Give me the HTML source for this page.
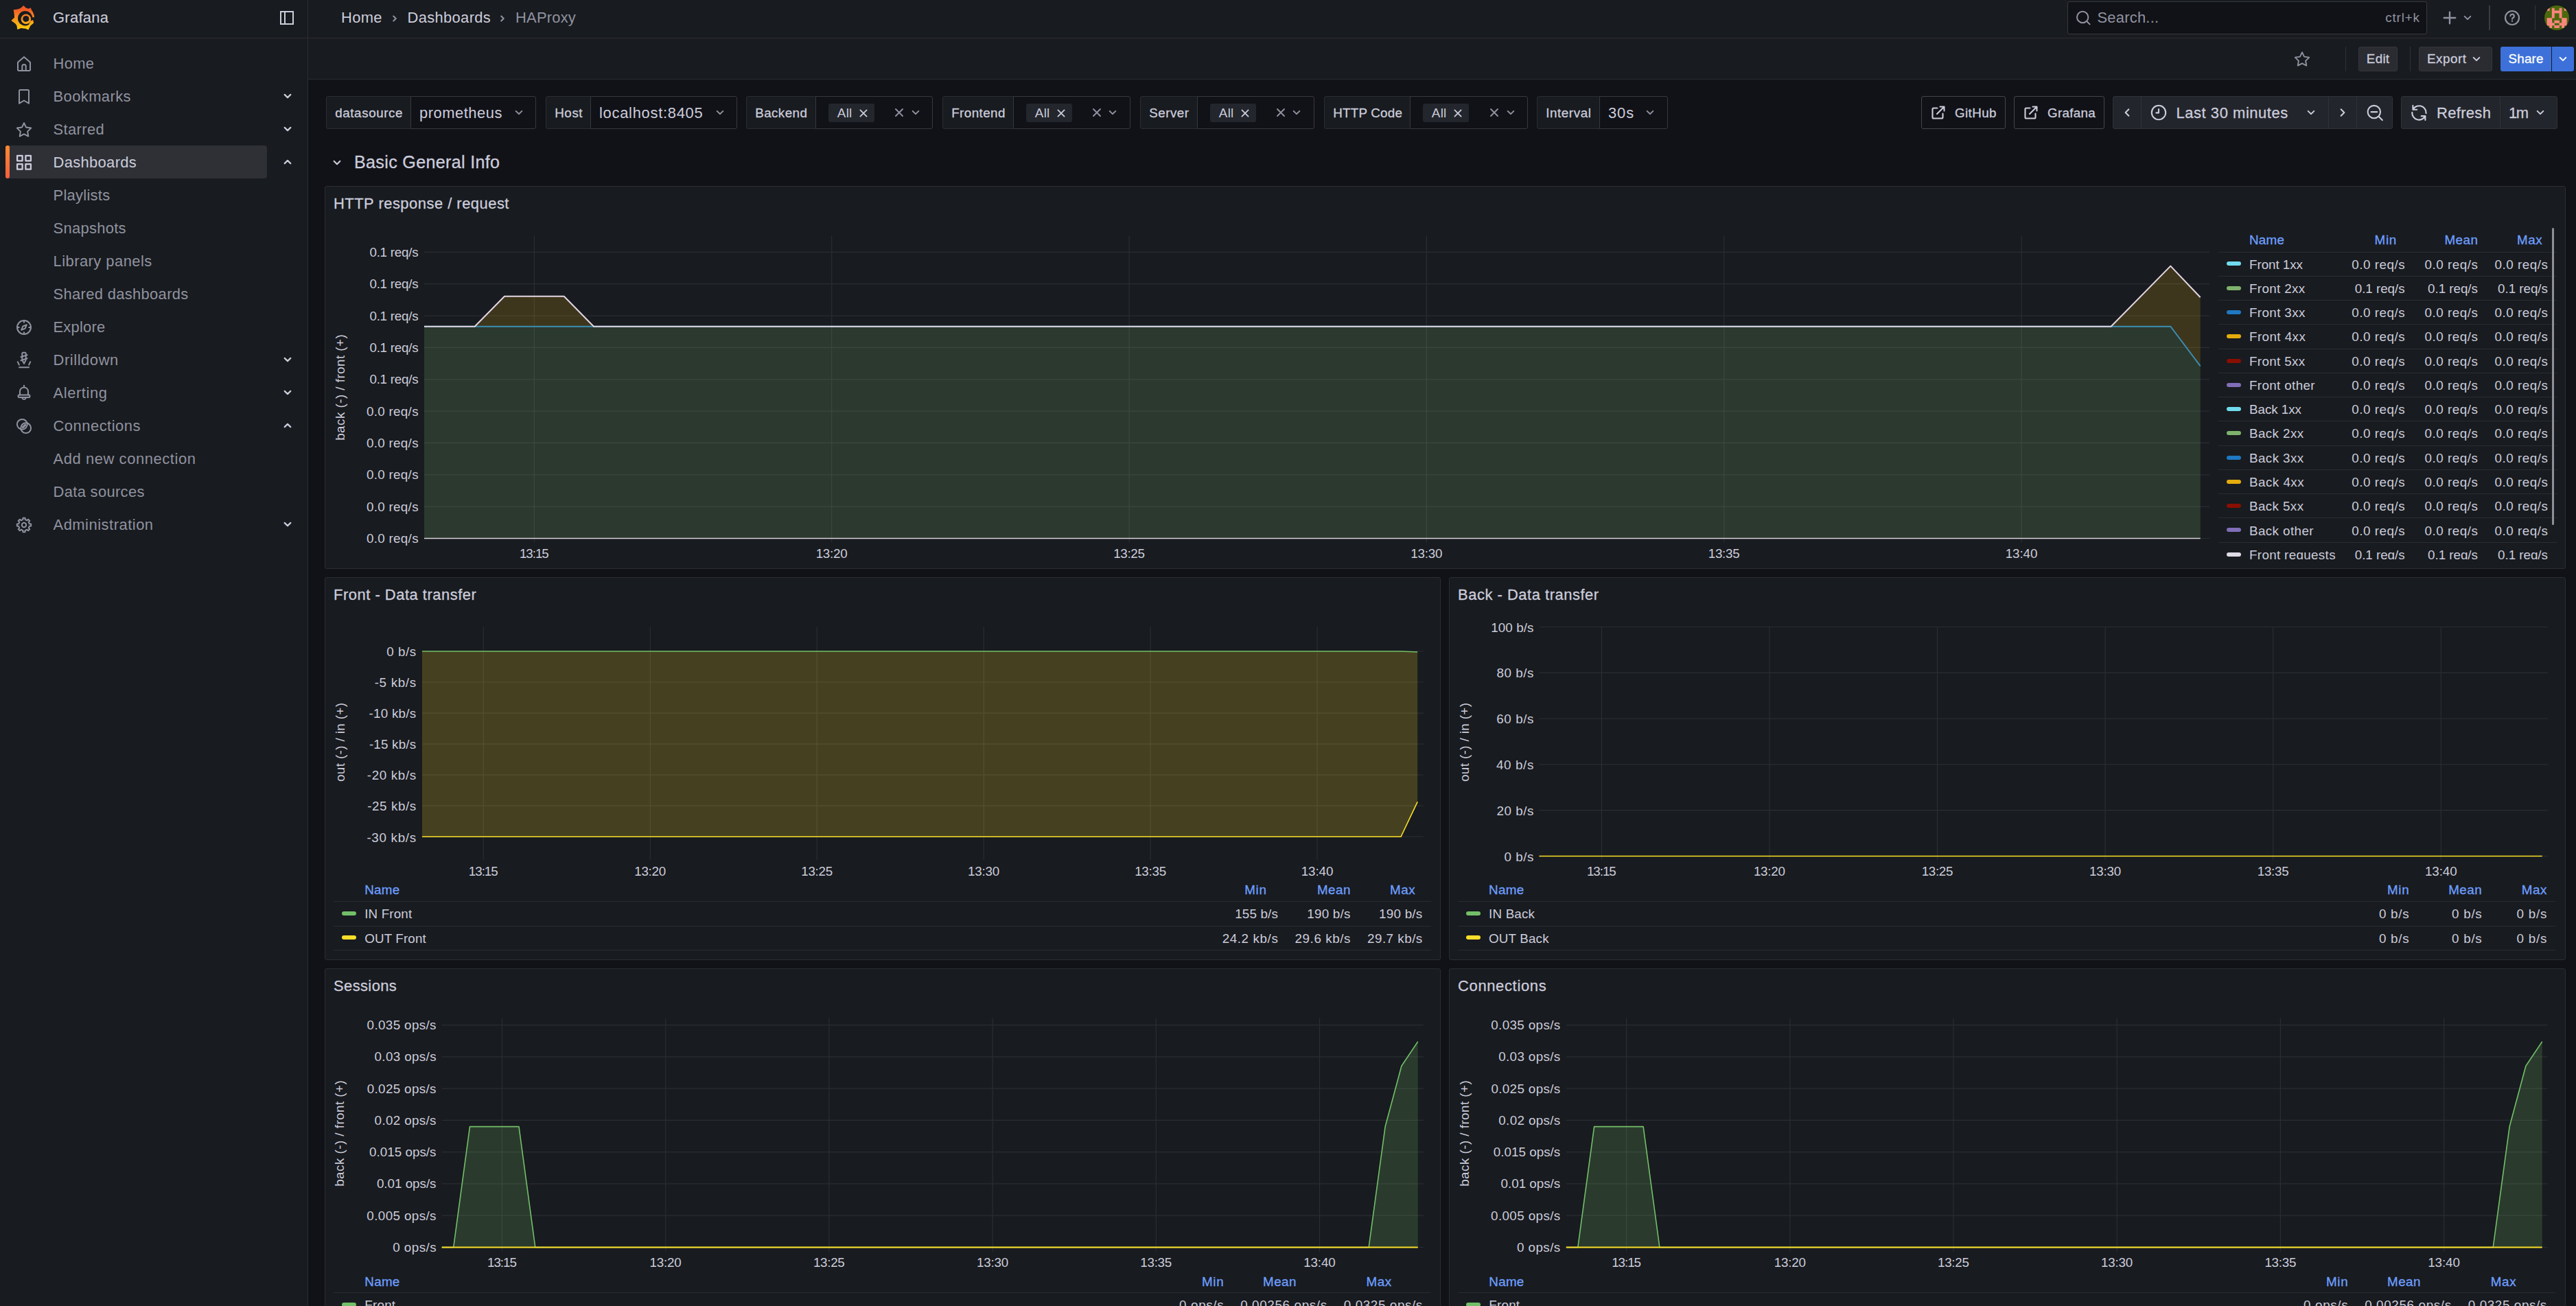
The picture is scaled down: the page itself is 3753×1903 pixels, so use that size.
<!DOCTYPE html><html><head><meta charset="utf-8"><title>HAProxy - Dashboards - Grafana</title><style>html,body{margin:0;padding:0;background:#111217;}
body{width:3753px;height:1903px;overflow:hidden;position:relative;font-family:"Liberation Sans",sans-serif;}
.a{position:absolute;}
.t{position:absolute;white-space:pre;font-kerning:normal;}
svg{overflow:visible;}
</style></head><body>
<div class="a" style="left:0px;top:0px;width:3753px;height:1903px;background:#111217;"></div>
<div class="a" style="left:0px;top:0px;width:448px;height:1903px;background:#181b1f;"></div>
<div class="a" style="left:448px;top:0px;width:1px;height:1903px;background:#2b2d32;"></div>
<div class="a" style="left:449px;top:0px;width:3304px;height:115px;background:#181b1f;"></div>
<div class="a" style="left:0px;top:55px;width:3753px;height:1px;background:#2b2d32;"></div>
<div class="a" style="left:449px;top:115px;width:3304px;height:1px;background:#2b2d32;"></div>
<svg class="a" style="left:10px;top:2px;" width="48" height="48" viewBox="0 0 48 48"><defs><linearGradient id="lg" gradientUnits="userSpaceOnUse" x1="0" y1="42" x2="0" y2="6"><stop offset="0" stop-color="#fcd20a"/><stop offset="0.5" stop-color="#f78d1e"/><stop offset="0.85" stop-color="#f05a28"/></linearGradient></defs>
<path d="M24.45 5.88 L27.28 9.26 L31.62 10.74 L34.93 9.19 L35.74 12.32 L38.05 15.81 L39.52 19.85 L40.00 23.53 L38.24 23.53 L37.13 26.84 L39.04 31.25 L34.74 34.85 L31.32 41.62 L27.28 39.78 L20.59 38.97 L15.37 40.88 L14.41 35.37 L12.13 32.35 L6.32 28.01 L11.03 23.53 L10.74 19.12 L9.63 12.13 L15.44 11.47 L19.93 9.93Z" fill="url(#lg)"/>
<circle cx="26.7" cy="24.7" r="10.7" fill="#181b1f"/>
<path d="M35.5 22.8 L41 23.8 L41 26.4 L36 27.2Z" fill="#181b1f"/>
<circle cx="27.9" cy="25.8" r="7.3" fill="url(#lg)"/>
<path d="M34.8 28.3 L38.3 27.3 L39 31.4 L34.6 35.2 L32.3 35.3 L32.6 32.6Z" fill="url(#lg)"/>
<circle cx="27.8" cy="25.5" r="4.55" fill="#181b1f"/>
<path d="M24.4 29.4 Q25.9 31.6 28.4 31 Q29.7 30.5 29.4 29.5" fill="none" stroke="url(#lg)" stroke-width="1.25" stroke-linecap="round"/></svg>
<span class="t" style="left:77.00px;top:11.03px;font-size:21.95px;line-height:29px;letter-spacing:0.288px;color:#ccccdc;font-weight:400;-webkit-text-stroke:0.12px #ccccdc;">Grafana</span>
<svg class="a" style="left:406px;top:14px;" width="24" height="24" viewBox="0 0 24 24"><g fill="none" stroke="#ccccdc" stroke-width="2"><rect x="3" y="3" width="18" height="18"/><path d="M9 3v18"/></g></svg>
<svg class="a" style="left:23.0px;top:80.5px;" width="24" height="24" viewBox="0 0 24 24"><g fill="none" stroke="#9092a0" stroke-width="2.0" stroke-linecap="round" stroke-linejoin="round"><path d="M3 9.8 L12 1.9 L21 9.8 V20.6 a1.4 1.4 0 0 1 -1.4 1.4 H4.4 a1.4 1.4 0 0 1 -1.4 -1.4 Z"/><path d="M9.3 22 V15.6 a2.7 2.7 0 0 1 5.4 0 V22"/></g></svg>
<span class="t" style="left:77.50px;top:77.53px;font-size:21.95px;line-height:29px;letter-spacing:0.298px;color:#9092a0;font-weight:400;">Home</span>
<svg class="a" style="left:23.0px;top:128.5px;" width="24" height="24" viewBox="0 0 24 24"><g fill="none" stroke="#9092a0" stroke-width="2.0" stroke-linecap="round" stroke-linejoin="round"><path d="M5 21.7 V3.4 a1.5 1.5 0 0 1 1.5 -1.5 H17.5 a1.5 1.5 0 0 1 1.5 1.5 V21.7 L12 17.5 Z"/></g></svg>
<span class="t" style="left:77.50px;top:125.53px;font-size:21.95px;line-height:29px;letter-spacing:0.417px;color:#9092a0;font-weight:400;">Bookmarks</span>
<svg class="a" style="left:407px;top:128px;" width="24" height="24" viewBox="-12 -12 24 24"><path d="M-4.3 -2.15 L0 2.15 L4.3 -2.15" fill="none" stroke="#ccccdc" stroke-width="2.2" stroke-linecap="round" stroke-linejoin="round"/></svg>
<svg class="a" style="left:23.0px;top:176.5px;" width="24" height="24" viewBox="0 0 24 24"><g fill="none" stroke="#9092a0" stroke-width="2.0" stroke-linecap="round" stroke-linejoin="round"><path d="M12 2.2 L15.1 8.6 L22.2 9.6 L17.1 14.6 L18.3 21.6 L12 18.3 L5.7 21.6 L6.9 14.6 L1.8 9.6 L8.9 8.6 Z"/></g></svg>
<span class="t" style="left:77.50px;top:173.53px;font-size:21.95px;line-height:29px;letter-spacing:0.392px;color:#9092a0;font-weight:400;">Starred</span>
<svg class="a" style="left:407px;top:176px;" width="24" height="24" viewBox="-12 -12 24 24"><path d="M-4.3 -2.15 L0 2.15 L4.3 -2.15" fill="none" stroke="#ccccdc" stroke-width="2.2" stroke-linecap="round" stroke-linejoin="round"/></svg>
<div class="a" style="left:8px;top:212px;width:381px;height:48px;background:#2e3036;border-radius:4px;"></div>
<div class="a" style="left:8px;top:212px;width:6px;height:48px;background:linear-gradient(180deg,#ff8a33,#f55f3e);border-radius:3px;"></div>
<svg class="a" style="left:23.0px;top:224.5px;" width="24" height="24" viewBox="0 0 24 24"><g fill="none" stroke="#ccccdc" stroke-width="2.3" stroke-linecap="round" stroke-linejoin="round"><rect x="2.1" y="1.8" width="7.5" height="7.5"/><rect x="14.4" y="1.8" width="7.5" height="7.5"/><rect x="2.1" y="14.2" width="7.5" height="7.5"/><rect x="14.4" y="14.2" width="7.5" height="7.5"/></g></svg>
<span class="t" style="left:77.50px;top:221.53px;font-size:21.95px;line-height:29px;letter-spacing:0.333px;color:#ccccdc;font-weight:400;">Dashboards</span>
<svg class="a" style="left:407px;top:224px;" width="24" height="24" viewBox="-12 -12 24 24"><path d="M-4.3 2.15 L0 -2.15 L4.3 2.15" fill="none" stroke="#ccccdc" stroke-width="2.2" stroke-linecap="round" stroke-linejoin="round"/></svg>
<span class="t" style="left:77.50px;top:269.53px;font-size:21.95px;line-height:29px;letter-spacing:0.270px;color:#9092a0;font-weight:400;">Playlists</span>
<span class="t" style="left:77.50px;top:317.53px;font-size:21.95px;line-height:29px;letter-spacing:0.298px;color:#9092a0;font-weight:400;">Snapshots</span>
<span class="t" style="left:77.50px;top:365.53px;font-size:21.95px;line-height:29px;letter-spacing:0.461px;color:#9092a0;font-weight:400;">Library panels</span>
<span class="t" style="left:77.50px;top:413.53px;font-size:21.95px;line-height:29px;letter-spacing:0.331px;color:#9092a0;font-weight:400;">Shared dashboards</span>
<svg class="a" style="left:23.0px;top:464.5px;" width="24" height="24" viewBox="0 0 24 24"><g fill="none" stroke="#9092a0" stroke-width="2.0" stroke-linecap="round" stroke-linejoin="round"><circle cx="12" cy="12" r="10"/><path d="M15.8 8.2 L13.6 13.6 L8.2 15.8 L10.4 10.4 Z"/><path d="M12 3.2v1.6M12 19.2v1.6M3.2 12h1.6M19.2 12h1.6"/></g></svg>
<span class="t" style="left:77.50px;top:461.53px;font-size:21.95px;line-height:29px;letter-spacing:0.229px;color:#9092a0;font-weight:400;">Explore</span>
<svg class="a" style="left:23.0px;top:512.5px;" width="24" height="24" viewBox="0 0 24 24"><g fill="none" stroke="#9092a0" stroke-width="2.0" stroke-linecap="round" stroke-linejoin="round"><path d="M9.3 2.3 a1.5 1.5 0 0 1 1.5 -1.5 h2.4 a1.5 1.5 0 0 1 1.5 1.5 v9.1 l-2.7 5.4 l-2.7 -5.4 Z"/><path d="M7.4 7.2 L16.6 4.2M7.4 12.2 L16.6 9.2"/><path d="M2.8 14.2 L4.9 18.6M21.2 14.2 L19.1 18.6M5 22.2h14"/></g></svg>
<span class="t" style="left:77.50px;top:509.53px;font-size:21.95px;line-height:29px;letter-spacing:0.566px;color:#9092a0;font-weight:400;">Drilldown</span>
<svg class="a" style="left:407px;top:512px;" width="24" height="24" viewBox="-12 -12 24 24"><path d="M-4.3 -2.15 L0 2.15 L4.3 -2.15" fill="none" stroke="#ccccdc" stroke-width="2.2" stroke-linecap="round" stroke-linejoin="round"/></svg>
<svg class="a" style="left:23.0px;top:560.5px;" width="24" height="24" viewBox="0 0 24 24"><g fill="none" stroke="#9092a0" stroke-width="2.0" stroke-linecap="round" stroke-linejoin="round"><path d="M6 14.6 V9.4 a6 6 0 0 1 12 0 V14.6"/><rect x="3.6" y="14.6" width="16.8" height="3.4" rx="1"/><path d="M9.4 19 a2.7 2.7 0 0 0 5.2 0"/><path d="M12 0.8v2"/></g></svg>
<span class="t" style="left:77.50px;top:557.53px;font-size:21.95px;line-height:29px;letter-spacing:0.586px;color:#9092a0;font-weight:400;">Alerting</span>
<svg class="a" style="left:407px;top:560px;" width="24" height="24" viewBox="-12 -12 24 24"><path d="M-4.3 -2.15 L0 2.15 L4.3 -2.15" fill="none" stroke="#ccccdc" stroke-width="2.2" stroke-linecap="round" stroke-linejoin="round"/></svg>
<svg class="a" style="left:23.0px;top:608.5px;" width="24" height="24" viewBox="0 0 24 24"><g fill="none" stroke="#9092a0" stroke-width="2.0" stroke-linecap="round" stroke-linejoin="round"><circle cx="9.3" cy="9.3" r="7.4"/><circle cx="14.7" cy="14.7" r="7.4"/><path d="M10.3 13.7 L13.7 10.3" stroke-width="3.2"/></g></svg>
<span class="t" style="left:77.50px;top:605.53px;font-size:21.95px;line-height:29px;letter-spacing:0.500px;color:#9092a0;font-weight:400;">Connections</span>
<svg class="a" style="left:407px;top:608px;" width="24" height="24" viewBox="-12 -12 24 24"><path d="M-4.3 2.15 L0 -2.15 L4.3 2.15" fill="none" stroke="#ccccdc" stroke-width="2.2" stroke-linecap="round" stroke-linejoin="round"/></svg>
<span class="t" style="left:77.50px;top:653.53px;font-size:21.95px;line-height:29px;letter-spacing:0.582px;color:#9092a0;font-weight:400;">Add new connection</span>
<span class="t" style="left:77.50px;top:701.53px;font-size:21.95px;line-height:29px;letter-spacing:0.333px;color:#9092a0;font-weight:400;">Data sources</span>
<svg class="a" style="left:23.0px;top:752.5px;" width="24" height="24" viewBox="0 0 24 24"><g fill="none" stroke="#9092a0" stroke-width="2.0" stroke-linecap="round" stroke-linejoin="round"><path d="M10.33 4.18 L10.46 1.82 L13.54 1.82 L13.67 4.18 L16.35 5.29 L18.11 3.71 L20.29 5.89 L18.71 7.65 L19.82 10.33 L22.18 10.46 L22.18 13.54 L19.82 13.67 L18.71 16.35 L20.29 18.11 L18.11 20.29 L16.35 18.71 L13.67 19.82 L13.54 22.18 L10.46 22.18 L10.33 19.82 L7.65 18.71 L5.89 20.29 L3.71 18.11 L5.29 16.35 L4.18 13.67 L1.82 13.54 L1.82 10.46 L4.18 10.33 L5.29 7.65 L3.71 5.89 L5.89 3.71 L7.65 5.29 Z" stroke-linejoin="round"/><circle cx="12" cy="12" r="3.2"/></g></svg>
<span class="t" style="left:77.50px;top:749.53px;font-size:21.95px;line-height:29px;letter-spacing:0.503px;color:#9092a0;font-weight:400;">Administration</span>
<svg class="a" style="left:407px;top:752px;" width="24" height="24" viewBox="-12 -12 24 24"><path d="M-4.3 -2.15 L0 2.15 L4.3 -2.15" fill="none" stroke="#ccccdc" stroke-width="2.2" stroke-linecap="round" stroke-linejoin="round"/></svg>
<span class="t" style="left:497.00px;top:11.03px;font-size:21.95px;line-height:29px;letter-spacing:0.298px;color:#ccccdc;font-weight:400;">Home</span>
<svg class="a" style="left:563px;top:14.5px;" width="24" height="24" viewBox="-12 -12 24 24"><path d="M-1.75 -3.5 L1.75 0 L-1.75 3.5" fill="none" stroke="#9092a0" stroke-width="2.1" stroke-linecap="round" stroke-linejoin="round"/></svg>
<span class="t" style="left:593.50px;top:11.03px;font-size:21.95px;line-height:29px;letter-spacing:0.333px;color:#ccccdc;font-weight:400;">Dashboards</span>
<svg class="a" style="left:720px;top:14.5px;" width="24" height="24" viewBox="-12 -12 24 24"><path d="M-1.75 -3.5 L1.75 0 L-1.75 3.5" fill="none" stroke="#9092a0" stroke-width="2.1" stroke-linecap="round" stroke-linejoin="round"/></svg>
<span class="t" style="left:751.00px;top:11.03px;font-size:21.95px;line-height:29px;letter-spacing:0.206px;color:#9092a0;font-weight:400;">HAProxy</span>
<div class="a" style="left:3012px;top:2px;width:524px;height:48px;background:#111217;border:1px solid #36383e;border-radius:3px;box-sizing:border-box;"></div>
<svg class="a" style="left:3023.0px;top:13.7px;" width="24" height="24" viewBox="0 0 24 24"><g fill="none" stroke="#9092a0" stroke-width="2.0" stroke-linecap="round" stroke-linejoin="round"><circle cx="11.2" cy="11" r="8.2"/><path d="M17.2 17 L21.6 21.4"/></g></svg>
<span class="t" style="left:3055.50px;top:11.03px;font-size:21.95px;line-height:29px;letter-spacing:0.227px;color:#9092a0;font-weight:400;">Search...</span>
<span class="t" style="left:3475.14px;top:13.02px;font-size:18.81px;line-height:25px;letter-spacing:0.878px;color:#9092a0;font-weight:400;">ctrl+k</span>
<svg class="a" style="left:3557.4px;top:13.7px;" width="24" height="24" viewBox="0 0 24 24"><g fill="none" stroke="#9092a0" stroke-width="2.4" stroke-linecap="round" stroke-linejoin="round"><path d="M12 3.8v16.4M3.8 12h16.4"/></g></svg>
<svg class="a" style="left:3583px;top:14px;" width="24" height="24" viewBox="-12 -12 24 24"><path d="M-4.3 -2.15 L0 2.15 L4.3 -2.15" fill="none" stroke="#9092a0" stroke-width="2.0" stroke-linecap="round" stroke-linejoin="round"/></svg>
<div class="a" style="left:3626.2px;top:8px;width:1.6px;height:36px;background:#3a3c43;"></div>
<svg class="a" style="left:3648.3px;top:13.7px;" width="24" height="24" viewBox="0 0 24 24"><g fill="none" stroke="#9092a0" stroke-width="2.2" stroke-linecap="round" stroke-linejoin="round"><circle cx="12" cy="12" r="10"/><path d="M9.4 9.3 a2.7 2.7 0 1 1 3.8 2.6 c-0.8 0.4 -1.2 0.9 -1.2 1.9"/><path d="M12 16.6v0.4"/></g></svg>
<div class="a" style="left:3692.9px;top:8px;width:1.4px;height:36px;background:#36383e;"></div>
<svg class="a" style="left:3707px;top:8px;" width="36" height="36" viewBox="0 0 36 36"><defs><clipPath id="avc"><circle cx="18" cy="18" r="18"/></clipPath></defs><g clip-path="url(#avc)"><rect width="36" height="36" fill="#4a690c"/><g fill="#ff8680"><rect x="3.64" y="3.80" width="3.89" height="3.89"/><rect x="10.82" y="3.80" width="3.89" height="3.89"/><rect x="21.59" y="3.80" width="3.89" height="3.89"/><rect x="28.77" y="3.80" width="3.89" height="3.89"/><rect x="10.82" y="7.39" width="3.89" height="3.89"/><rect x="14.41" y="7.39" width="3.89" height="3.89"/><rect x="18.00" y="7.39" width="3.89" height="3.89"/><rect x="21.59" y="7.39" width="3.89" height="3.89"/><rect x="10.82" y="10.98" width="3.89" height="3.89"/><rect x="21.59" y="10.98" width="3.89" height="3.89"/><rect x="10.82" y="14.57" width="3.89" height="3.89"/><rect x="21.59" y="14.57" width="3.89" height="3.89"/><rect x="3.64" y="18.16" width="3.89" height="3.89"/><rect x="7.23" y="18.16" width="3.89" height="3.89"/><rect x="25.18" y="18.16" width="3.89" height="3.89"/><rect x="28.77" y="18.16" width="3.89" height="3.89"/><rect x="3.64" y="21.75" width="3.89" height="3.89"/><rect x="7.23" y="21.75" width="3.89" height="3.89"/><rect x="14.41" y="21.75" width="3.89" height="3.89"/><rect x="18.00" y="21.75" width="3.89" height="3.89"/><rect x="25.18" y="21.75" width="3.89" height="3.89"/><rect x="28.77" y="21.75" width="3.89" height="3.89"/><rect x="3.64" y="25.34" width="3.89" height="3.89"/><rect x="7.23" y="25.34" width="3.89" height="3.89"/><rect x="10.82" y="25.34" width="3.89" height="3.89"/><rect x="21.59" y="25.34" width="3.89" height="3.89"/><rect x="25.18" y="25.34" width="3.89" height="3.89"/><rect x="28.77" y="25.34" width="3.89" height="3.89"/><rect x="7.23" y="28.93" width="3.89" height="3.89"/><rect x="14.41" y="28.93" width="3.89" height="3.89"/><rect x="18.00" y="28.93" width="3.89" height="3.89"/><rect x="25.18" y="28.93" width="3.89" height="3.89"/></g></g></svg>
<svg class="a" style="left:3342.3px;top:73.7px;" width="24" height="24" viewBox="0 0 24 24"><g fill="none" stroke="#9092a0" stroke-width="1.9" stroke-linecap="round" stroke-linejoin="round"><path d="M12 2.2 L15.1 8.6 L22.2 9.6 L17.1 14.6 L18.3 21.6 L12 18.3 L5.7 21.6 L6.9 14.6 L1.8 9.6 L8.9 8.6 Z"/></g></svg>
<div class="a" style="left:3417px;top:68px;width:1px;height:36px;background:#2f3136;"></div>
<div class="a" style="left:3436px;top:68px;width:57px;height:36px;background:#2a2c32;border:1px solid #34363c;border-radius:3px;box-sizing:border-box;"></div>
<span class="t" style="left:3447.86px;top:73.22px;font-size:18.81px;line-height:25px;letter-spacing:0.282px;color:#ccccdc;font-weight:400;-webkit-text-stroke:0.3px #ccccdc;">Edit</span>
<div class="a" style="left:3511px;top:68px;width:1px;height:36px;background:#2f3136;"></div>
<div class="a" style="left:3524px;top:68px;width:107px;height:36px;background:#2a2c32;border:1px solid #34363c;border-radius:3px;box-sizing:border-box;"></div>
<span class="t" style="left:3536.00px;top:73.22px;font-size:18.81px;line-height:25px;letter-spacing:0.543px;color:#ccccdc;font-weight:400;-webkit-text-stroke:0.3px #ccccdc;">Export</span>
<svg class="a" style="left:3596px;top:74px;" width="24" height="24" viewBox="-12 -12 24 24"><path d="M-4.3 -2.15 L0 2.15 L4.3 -2.15" fill="none" stroke="#ccccdc" stroke-width="2.0" stroke-linecap="round" stroke-linejoin="round"/></svg>
<div class="a" style="left:3643px;top:68px;width:74px;height:36px;background:#3d71d9;border-radius:3px;border-radius:3px 0 0 3px;"></div>
<span class="t" style="left:3654.58px;top:73.22px;font-size:18.81px;line-height:25px;letter-spacing:0.158px;color:#ffffff;font-weight:400;-webkit-text-stroke:0.3px #ffffff;">Share</span>
<div class="a" style="left:3718px;top:68px;width:32px;height:36px;background:#3d71d9;border-radius:0 3px 3px 0;"></div>
<svg class="a" style="left:3722px;top:74px;" width="24" height="24" viewBox="-12 -12 24 24"><path d="M-4.3 -2.15 L0 2.15 L4.3 -2.15" fill="none" stroke="#ffffff" stroke-width="2.0" stroke-linecap="round" stroke-linejoin="round"/></svg>
<div class="a" style="left:475px;top:140px;width:124px;height:48px;background:#181b1f;border:1px solid #2b2d32;box-sizing:border-box;border-radius:3px 0 0 3px;"></div>
<div class="a" style="left:598px;top:140px;width:183px;height:48px;background:#111217;border:1px solid #36383e;box-sizing:border-box;border-radius:0 3px 3px 0;"></div>
<span class="t" style="left:488.20px;top:152.02px;font-size:18.81px;line-height:25px;letter-spacing:0.595px;color:#ccccdc;font-weight:400;-webkit-text-stroke:0.3px #ccccdc;">datasource</span>
<span class="t" style="left:611.00px;top:149.53px;font-size:21.95px;line-height:29px;letter-spacing:0.504px;color:#ccccdc;font-weight:400;">prometheus</span>
<svg class="a" style="left:743.7px;top:152px;" width="24" height="24" viewBox="-12 -12 24 24"><path d="M-4.3 -2.15 L0 2.15 L4.3 -2.15" fill="none" stroke="#9092a0" stroke-width="2.0" stroke-linecap="round" stroke-linejoin="round"/></svg>
<div class="a" style="left:795px;top:140px;width:66px;height:48px;background:#181b1f;border:1px solid #2b2d32;box-sizing:border-box;border-radius:3px 0 0 3px;"></div>
<div class="a" style="left:860px;top:140px;width:214px;height:48px;background:#111217;border:1px solid #36383e;box-sizing:border-box;border-radius:0 3px 3px 0;"></div>
<span class="t" style="left:808.20px;top:152.02px;font-size:18.81px;line-height:25px;letter-spacing:0.582px;color:#ccccdc;font-weight:400;-webkit-text-stroke:0.3px #ccccdc;">Host</span>
<span class="t" style="left:873.00px;top:149.53px;font-size:21.95px;line-height:29px;letter-spacing:0.712px;color:#ccccdc;font-weight:400;">localhost:8405</span>
<svg class="a" style="left:1036.7px;top:152px;" width="24" height="24" viewBox="-12 -12 24 24"><path d="M-4.3 -2.15 L0 2.15 L4.3 -2.15" fill="none" stroke="#9092a0" stroke-width="2.0" stroke-linecap="round" stroke-linejoin="round"/></svg>
<div class="a" style="left:1087px;top:140px;width:102px;height:48px;background:#181b1f;border:1px solid #2b2d32;box-sizing:border-box;border-radius:3px 0 0 3px;"></div>
<div class="a" style="left:1188px;top:140px;width:171px;height:48px;background:#111217;border:1px solid #36383e;box-sizing:border-box;border-radius:0 3px 3px 0;"></div>
<span class="t" style="left:1100.20px;top:152.02px;font-size:18.81px;line-height:25px;letter-spacing:0.426px;color:#ccccdc;font-weight:400;-webkit-text-stroke:0.3px #ccccdc;">Backend</span>
<div class="a" style="left:1207px;top:151px;width:66.5px;height:27px;background:#23262c;border-radius:3px;"></div>
<span class="t" style="left:1219.80px;top:152.22px;font-size:18.81px;line-height:25px;letter-spacing:0.300px;color:#ccccdc;font-weight:400;">All</span>
<svg class="a" style="left:1245.5px;top:152.5px;" width="24" height="24" viewBox="-12 -12 24 24"><path d="M-4.6 -4.6L4.6 4.6M4.6 -4.6L-4.6 4.6" fill="none" stroke="#ccccdc" stroke-width="1.8" stroke-linecap="round"/></svg>
<svg class="a" style="left:1298px;top:152px;" width="24" height="24" viewBox="-12 -12 24 24"><path d="M-5 -5L5 5M5 -5L-5 5" fill="none" stroke="#9092a0" stroke-width="1.9" stroke-linecap="round"/></svg>
<svg class="a" style="left:1321.7px;top:152px;" width="24" height="24" viewBox="-12 -12 24 24"><path d="M-4.3 -2.15 L0 2.15 L4.3 -2.15" fill="none" stroke="#9092a0" stroke-width="2.0" stroke-linecap="round" stroke-linejoin="round"/></svg>
<div class="a" style="left:1373px;top:140px;width:104px;height:48px;background:#181b1f;border:1px solid #2b2d32;box-sizing:border-box;border-radius:3px 0 0 3px;"></div>
<div class="a" style="left:1476px;top:140px;width:170.5px;height:48px;background:#111217;border:1px solid #36383e;box-sizing:border-box;border-radius:0 3px 3px 0;"></div>
<span class="t" style="left:1386.20px;top:152.02px;font-size:18.81px;line-height:25px;letter-spacing:0.433px;color:#ccccdc;font-weight:400;-webkit-text-stroke:0.3px #ccccdc;">Frontend</span>
<div class="a" style="left:1495px;top:151px;width:66.5px;height:27px;background:#23262c;border-radius:3px;"></div>
<span class="t" style="left:1507.80px;top:152.22px;font-size:18.81px;line-height:25px;letter-spacing:0.300px;color:#ccccdc;font-weight:400;">All</span>
<svg class="a" style="left:1533.5px;top:152.5px;" width="24" height="24" viewBox="-12 -12 24 24"><path d="M-4.6 -4.6L4.6 4.6M4.6 -4.6L-4.6 4.6" fill="none" stroke="#ccccdc" stroke-width="1.8" stroke-linecap="round"/></svg>
<svg class="a" style="left:1585.5px;top:152px;" width="24" height="24" viewBox="-12 -12 24 24"><path d="M-5 -5L5 5M5 -5L-5 5" fill="none" stroke="#9092a0" stroke-width="1.9" stroke-linecap="round"/></svg>
<svg class="a" style="left:1609.2px;top:152px;" width="24" height="24" viewBox="-12 -12 24 24"><path d="M-4.3 -2.15 L0 2.15 L4.3 -2.15" fill="none" stroke="#9092a0" stroke-width="2.0" stroke-linecap="round" stroke-linejoin="round"/></svg>
<div class="a" style="left:1661px;top:140px;width:84px;height:48px;background:#181b1f;border:1px solid #2b2d32;box-sizing:border-box;border-radius:3px 0 0 3px;"></div>
<div class="a" style="left:1744px;top:140px;width:170.5px;height:48px;background:#111217;border:1px solid #36383e;box-sizing:border-box;border-radius:0 3px 3px 0;"></div>
<span class="t" style="left:1674.20px;top:152.02px;font-size:18.81px;line-height:25px;letter-spacing:0.489px;color:#ccccdc;font-weight:400;-webkit-text-stroke:0.3px #ccccdc;">Server</span>
<div class="a" style="left:1763px;top:151px;width:66.5px;height:27px;background:#23262c;border-radius:3px;"></div>
<span class="t" style="left:1775.80px;top:152.22px;font-size:18.81px;line-height:25px;letter-spacing:0.300px;color:#ccccdc;font-weight:400;">All</span>
<svg class="a" style="left:1801.5px;top:152.5px;" width="24" height="24" viewBox="-12 -12 24 24"><path d="M-4.6 -4.6L4.6 4.6M4.6 -4.6L-4.6 4.6" fill="none" stroke="#ccccdc" stroke-width="1.8" stroke-linecap="round"/></svg>
<svg class="a" style="left:1853.5px;top:152px;" width="24" height="24" viewBox="-12 -12 24 24"><path d="M-5 -5L5 5M5 -5L-5 5" fill="none" stroke="#9092a0" stroke-width="1.9" stroke-linecap="round"/></svg>
<svg class="a" style="left:1877.2px;top:152px;" width="24" height="24" viewBox="-12 -12 24 24"><path d="M-4.3 -2.15 L0 2.15 L4.3 -2.15" fill="none" stroke="#9092a0" stroke-width="2.0" stroke-linecap="round" stroke-linejoin="round"/></svg>
<div class="a" style="left:1929px;top:140px;width:126px;height:48px;background:#181b1f;border:1px solid #2b2d32;box-sizing:border-box;border-radius:3px 0 0 3px;"></div>
<div class="a" style="left:2054px;top:140px;width:172px;height:48px;background:#111217;border:1px solid #36383e;box-sizing:border-box;border-radius:0 3px 3px 0;"></div>
<span class="t" style="left:1942.20px;top:152.02px;font-size:18.81px;line-height:25px;letter-spacing:0.232px;color:#ccccdc;font-weight:400;-webkit-text-stroke:0.3px #ccccdc;">HTTP Code</span>
<div class="a" style="left:2073px;top:151px;width:66.5px;height:27px;background:#23262c;border-radius:3px;"></div>
<span class="t" style="left:2085.80px;top:152.22px;font-size:18.81px;line-height:25px;letter-spacing:0.300px;color:#ccccdc;font-weight:400;">All</span>
<svg class="a" style="left:2111.5px;top:152.5px;" width="24" height="24" viewBox="-12 -12 24 24"><path d="M-4.6 -4.6L4.6 4.6M4.6 -4.6L-4.6 4.6" fill="none" stroke="#ccccdc" stroke-width="1.8" stroke-linecap="round"/></svg>
<svg class="a" style="left:2165px;top:152px;" width="24" height="24" viewBox="-12 -12 24 24"><path d="M-5 -5L5 5M5 -5L-5 5" fill="none" stroke="#9092a0" stroke-width="1.9" stroke-linecap="round"/></svg>
<svg class="a" style="left:2188.7px;top:152px;" width="24" height="24" viewBox="-12 -12 24 24"><path d="M-4.3 -2.15 L0 2.15 L4.3 -2.15" fill="none" stroke="#9092a0" stroke-width="2.0" stroke-linecap="round" stroke-linejoin="round"/></svg>
<div class="a" style="left:2239px;top:140px;width:92px;height:48px;background:#181b1f;border:1px solid #2b2d32;box-sizing:border-box;border-radius:3px 0 0 3px;"></div>
<div class="a" style="left:2330px;top:140px;width:99.5px;height:48px;background:#111217;border:1px solid #36383e;box-sizing:border-box;border-radius:0 3px 3px 0;"></div>
<span class="t" style="left:2252.20px;top:152.02px;font-size:18.81px;line-height:25px;letter-spacing:0.577px;color:#ccccdc;font-weight:400;-webkit-text-stroke:0.3px #ccccdc;">Interval</span>
<span class="t" style="left:2343.00px;top:149.53px;font-size:21.95px;line-height:29px;letter-spacing:0.868px;color:#ccccdc;font-weight:400;">30s</span>
<svg class="a" style="left:2392.2px;top:152px;" width="24" height="24" viewBox="-12 -12 24 24"><path d="M-4.3 -2.15 L0 2.15 L4.3 -2.15" fill="none" stroke="#9092a0" stroke-width="2.0" stroke-linecap="round" stroke-linejoin="round"/></svg>
<div class="a" style="left:2799px;top:140px;width:123px;height:48px;background:#111217;border:1px solid #43454c;border-radius:3px;box-sizing:border-box;"></div>
<svg class="a" style="left:2811.5px;top:152.0px;" width="24" height="24" viewBox="0 0 24 24"><g fill="none" stroke="#ccccdc" stroke-width="2.1" stroke-linecap="round" stroke-linejoin="round"><path d="M18.5 13.5v5.5a1.5 1.5 0 0 1 -1.5 1.5H5a1.5 1.5 0 0 1 -1.5 -1.5V7a1.5 1.5 0 0 1 1.5 -1.5h5.5"/><path d="M14.5 3.5h6v6M20.5 3.5 L10 14"/></g></svg>
<span class="t" style="left:2848.00px;top:152.22px;font-size:18.81px;line-height:25px;letter-spacing:0.383px;color:#ccccdc;font-weight:400;-webkit-text-stroke:0.3px #ccccdc;">GitHub</span>
<div class="a" style="left:2934px;top:140px;width:132px;height:48px;background:#111217;border:1px solid #43454c;border-radius:3px;box-sizing:border-box;"></div>
<svg class="a" style="left:2946.5px;top:152.0px;" width="24" height="24" viewBox="0 0 24 24"><g fill="none" stroke="#ccccdc" stroke-width="2.1" stroke-linecap="round" stroke-linejoin="round"><path d="M18.5 13.5v5.5a1.5 1.5 0 0 1 -1.5 1.5H5a1.5 1.5 0 0 1 -1.5 -1.5V7a1.5 1.5 0 0 1 1.5 -1.5h5.5"/><path d="M14.5 3.5h6v6M20.5 3.5 L10 14"/></g></svg>
<span class="t" style="left:2983.00px;top:152.22px;font-size:18.81px;line-height:25px;letter-spacing:0.280px;color:#ccccdc;font-weight:400;-webkit-text-stroke:0.3px #ccccdc;">Grafana</span>
<div class="a" style="left:3078px;top:140px;width:408px;height:48px;background:#22252b;border:1px solid #2f3237;border-radius:3px;box-sizing:border-box;"></div>
<div class="a" style="left:3119px;top:141px;width:1px;height:46px;background:#2f3237;"></div>
<div class="a" style="left:3392px;top:141px;width:1px;height:46px;background:#2f3237;"></div>
<div class="a" style="left:3433px;top:141px;width:1px;height:46px;background:#2f3237;"></div>
<svg class="a" style="left:3086.5px;top:152px;" width="24" height="24" viewBox="-12 -12 24 24"><path d="M2.35 -4.7 L-2.35 0 L2.35 4.7" fill="none" stroke="#ccccdc" stroke-width="2.1" stroke-linecap="round" stroke-linejoin="round"/></svg>
<svg class="a" style="left:3133.0px;top:152.3px;" width="24" height="24" viewBox="0 0 24 24"><g fill="none" stroke="#ccccdc" stroke-width="2.1" stroke-linecap="round" stroke-linejoin="round"><circle cx="12" cy="12" r="10.2"/><path d="M12 7V12.4H8.4"/></g></svg>
<span class="t" style="left:3170.50px;top:149.53px;font-size:21.95px;line-height:29px;letter-spacing:0.561px;color:#ccccdc;font-weight:400;-webkit-text-stroke:0.3px #ccccdc;">Last 30 minutes</span>
<svg class="a" style="left:3355px;top:152px;" width="24" height="24" viewBox="-12 -12 24 24"><path d="M-4.3 -2.15 L0 2.15 L4.3 -2.15" fill="none" stroke="#ccccdc" stroke-width="2.0" stroke-linecap="round" stroke-linejoin="round"/></svg>
<svg class="a" style="left:3400.5px;top:152px;" width="24" height="24" viewBox="-12 -12 24 24"><path d="M-2.35 -4.7 L2.35 0 L-2.35 4.7" fill="none" stroke="#ccccdc" stroke-width="2.1" stroke-linecap="round" stroke-linejoin="round"/></svg>
<svg class="a" style="left:3447.5px;top:152.0px;" width="24" height="24" viewBox="0 0 24 24"><g fill="none" stroke="#ccccdc" stroke-width="2.1" stroke-linecap="round" stroke-linejoin="round"><circle cx="10.8" cy="11.1" r="9.2"/><path d="M17.5 17.8 L22.8 23.1M6.5 11.1h8.8"/></g></svg>
<div class="a" style="left:3498px;top:140px;width:228px;height:48px;background:#22252b;border:1px solid #2f3237;border-radius:3px;box-sizing:border-box;"></div>
<div class="a" style="left:3642px;top:141px;width:1px;height:46px;background:#2f3237;"></div>
<svg class="a" style="left:3512.0px;top:152.0px;" width="24" height="24" viewBox="0 0 24 24"><g fill="none" stroke="#ccccdc" stroke-width="2.1" stroke-linecap="round" stroke-linejoin="round"><path d="M3.4 1.9 V7.7 H9.2M3.4 7.7 A10.15 10.15 0 0 1 22.55 13M21.4 22.9 V17.1 H15.6M21.4 17.1 A10.15 10.15 0 0 1 2.25 11.8"/></g></svg>
<span class="t" style="left:3550.00px;top:149.53px;font-size:21.95px;line-height:29px;letter-spacing:0.337px;color:#ccccdc;font-weight:400;-webkit-text-stroke:0.3px #ccccdc;">Refresh</span>
<span class="t" style="left:3655.00px;top:149.53px;font-size:21.95px;line-height:29px;letter-spacing:-1.338px;color:#ccccdc;font-weight:400;-webkit-text-stroke:0.3px #ccccdc;">1m</span>
<svg class="a" style="left:3689px;top:152px;" width="24" height="24" viewBox="-12 -12 24 24"><path d="M-4.3 -2.15 L0 2.15 L4.3 -2.15" fill="none" stroke="#ccccdc" stroke-width="2.0" stroke-linecap="round" stroke-linejoin="round"/></svg>
<svg class="a" style="left:479px;top:225px;" width="24" height="24" viewBox="-12 -12 24 24"><path d="M-4.4 -2.2 L0 2.2 L4.4 -2.2" fill="none" stroke="#ccccdc" stroke-width="2.1" stroke-linecap="round" stroke-linejoin="round"/></svg>
<span class="t" style="left:516.00px;top:219.43px;font-size:25.08px;line-height:34px;letter-spacing:0.339px;color:#ccccdc;font-weight:400;-webkit-text-stroke:0.3px #ccccdc;">Basic General Info</span>
<div class="a" style="left:473px;top:271px;width:3265px;height:558px;background:#181b1f;border:1px solid #2b2d32;border-radius:3px;box-sizing:border-box;"></div>
<span class="t" style="left:486.00px;top:281.83px;font-size:21.95px;line-height:29px;letter-spacing:0.490px;color:#ccccdc;font-weight:400;-webkit-text-stroke:0.3px #ccccdc;">HTTP response / request</span>
<svg class="a" style="left:0px;top:0px;pointer-events:none;" width="3753" height="1903" viewBox="0 0 3753 1903"><path d="M618 367.4H3219" stroke="#2a2d32" stroke-width="1.2"/><path d="M618 413.7H3219" stroke="#2a2d32" stroke-width="1.2"/><path d="M618 460.1H3219" stroke="#2a2d32" stroke-width="1.2"/><path d="M618 506.4H3219" stroke="#2a2d32" stroke-width="1.2"/><path d="M618 552.8H3219" stroke="#2a2d32" stroke-width="1.2"/><path d="M618 599.1H3219" stroke="#2a2d32" stroke-width="1.2"/><path d="M618 645.4H3219" stroke="#2a2d32" stroke-width="1.2"/><path d="M618 691.8H3219" stroke="#2a2d32" stroke-width="1.2"/><path d="M618 738.1H3219" stroke="#2a2d32" stroke-width="1.2"/><path d="M618 784.5H3219" stroke="#2a2d32" stroke-width="1.2"/><path d="M778.4 343.5V790.4" stroke="#2a2d32" stroke-width="1.2"/><path d="M1211.7 343.5V790.4" stroke="#2a2d32" stroke-width="1.2"/><path d="M1645.1 343.5V790.4" stroke="#2a2d32" stroke-width="1.2"/><path d="M2078.4 343.5V790.4" stroke="#2a2d32" stroke-width="1.2"/><path d="M2511.8 343.5V790.4" stroke="#2a2d32" stroke-width="1.2"/><path d="M2945.1 343.5V790.4" stroke="#2a2d32" stroke-width="1.2"/><polygon points="618.0,475.7 3162.3,475.7 3205.7,533.4 3205.7,784.4 618.0,784.4" fill="#7eb26d" fill-opacity="0.2"/><polygon points="618.0,475.7 691.7,475.7 735.0,431.8 821.7,431.8 865.0,475.7 3075.6,475.7 3162.3,387.6 3205.7,433.2 3205.7,533.4 3162.3,475.7 618.0,475.7" fill="#e5ac0e" fill-opacity="0.185"/><polyline points="618.0,475.7 3162.3,475.7 3205.7,533.4" fill="none" stroke="#3b8db3" stroke-width="1.9"/><polyline points="618.0,475.7 691.7,475.7 735.0,431.8 821.7,431.8 865.0,475.7 3075.6,475.7 3162.3,387.6 3205.7,433.2" fill="none" stroke="#e4d6e4" stroke-width="2" stroke-linejoin="round"/><path d="M618 784.4H3205.7" stroke="#d8d2dc" stroke-width="1.5"/></svg>
<span class="t" style="left:538.44px;top:354.92px;font-size:18.81px;line-height:25px;letter-spacing:-0.255px;color:#ccccdc;font-weight:400;">0.1 req/s</span>
<span class="t" style="left:538.44px;top:401.26px;font-size:18.81px;line-height:25px;letter-spacing:-0.255px;color:#ccccdc;font-weight:400;">0.1 req/s</span>
<span class="t" style="left:538.44px;top:447.60px;font-size:18.81px;line-height:25px;letter-spacing:-0.255px;color:#ccccdc;font-weight:400;">0.1 req/s</span>
<span class="t" style="left:538.44px;top:493.94px;font-size:18.81px;line-height:25px;letter-spacing:-0.255px;color:#ccccdc;font-weight:400;">0.1 req/s</span>
<span class="t" style="left:538.44px;top:540.28px;font-size:18.81px;line-height:25px;letter-spacing:-0.255px;color:#ccccdc;font-weight:400;">0.1 req/s</span>
<span class="t" style="left:533.88px;top:586.62px;font-size:18.81px;line-height:25px;letter-spacing:0.315px;color:#ccccdc;font-weight:400;">0.0 req/s</span>
<span class="t" style="left:533.88px;top:632.96px;font-size:18.81px;line-height:25px;letter-spacing:0.315px;color:#ccccdc;font-weight:400;">0.0 req/s</span>
<span class="t" style="left:533.88px;top:679.30px;font-size:18.81px;line-height:25px;letter-spacing:0.315px;color:#ccccdc;font-weight:400;">0.0 req/s</span>
<span class="t" style="left:533.88px;top:725.64px;font-size:18.81px;line-height:25px;letter-spacing:0.315px;color:#ccccdc;font-weight:400;">0.0 req/s</span>
<span class="t" style="left:533.88px;top:771.98px;font-size:18.81px;line-height:25px;letter-spacing:0.315px;color:#ccccdc;font-weight:400;">0.0 req/s</span>
<span class="t" style="left:756.94px;top:794.12px;font-size:18.81px;line-height:25px;letter-spacing:-1.037px;color:#ccccdc;font-weight:400;">13:15</span>
<span class="t" style="left:1188.65px;top:794.12px;font-size:18.81px;line-height:25px;letter-spacing:-0.221px;color:#ccccdc;font-weight:400;">13:20</span>
<span class="t" style="left:1622.15px;top:794.12px;font-size:18.81px;line-height:25px;letter-spacing:-0.305px;color:#ccccdc;font-weight:400;">13:25</span>
<span class="t" style="left:2055.27px;top:794.12px;font-size:18.81px;line-height:25px;letter-spacing:-0.193px;color:#ccccdc;font-weight:400;">13:30</span>
<span class="t" style="left:2488.78px;top:794.12px;font-size:18.81px;line-height:25px;letter-spacing:-0.277px;color:#ccccdc;font-weight:400;">13:35</span>
<span class="t" style="left:2921.75px;top:794.12px;font-size:18.81px;line-height:25px;letter-spacing:-0.093px;color:#ccccdc;font-weight:400;">13:40</span>
<span class="t" style="left:418.18px;top:551.52px;font-size:18.81px;line-height:25px;letter-spacing:0.465px;color:#ccccdc;font-weight:400;transform:rotate(-90deg);transform-origin:77.32px 12.48px;">back (-) / front (+)</span>
<div class="a" style="left:3225px;top:330px;width:505px;height:485px;overflow:hidden;"><div class="a" style="left:-3225px;top:-330px;">
<span class="t" style="left:3277.00px;top:337.32px;font-size:18.81px;line-height:25px;letter-spacing:0.282px;color:#6e9fff;font-weight:400;-webkit-text-stroke:0.3px #6e9fff;">Name</span>
<span class="t" style="left:3459.54px;top:337.32px;font-size:18.81px;line-height:25px;letter-spacing:0.717px;color:#6e9fff;font-weight:400;-webkit-text-stroke:0.3px #6e9fff;">Min</span>
<span class="t" style="left:3561.38px;top:337.32px;font-size:18.81px;line-height:25px;letter-spacing:0.519px;color:#6e9fff;font-weight:400;-webkit-text-stroke:0.3px #6e9fff;">Mean</span>
<span class="t" style="left:3667.04px;top:337.32px;font-size:18.81px;line-height:25px;letter-spacing:0.605px;color:#6e9fff;font-weight:400;-webkit-text-stroke:0.3px #6e9fff;">Max</span>
<div class="a" style="left:3232px;top:366.5px;width:493px;height:1px;background:#2a2c31;"></div>
<div class="a" style="left:3244px;top:381.43499999999995px;width:21px;height:6px;background:#70dbed;border-radius:3px;"></div>
<span class="t" style="left:3277.00px;top:372.56px;font-size:18.81px;line-height:25px;letter-spacing:-0.049px;color:#ccccdc;font-weight:400;">Front 1xx</span>
<span class="t" style="left:3426.18px;top:372.56px;font-size:18.81px;line-height:25px;letter-spacing:0.540px;color:#ccccdc;font-weight:400;">0.0 req/s</span>
<span class="t" style="left:3532.48px;top:372.56px;font-size:18.81px;line-height:25px;letter-spacing:0.540px;color:#ccccdc;font-weight:400;">0.0 req/s</span>
<span class="t" style="left:3634.48px;top:372.56px;font-size:18.81px;line-height:25px;letter-spacing:0.540px;color:#ccccdc;font-weight:400;">0.0 req/s</span>
<div class="a" style="left:3232px;top:401.77px;width:493px;height:1px;background:#2a2c31;"></div>
<div class="a" style="left:3244px;top:416.7049999999999px;width:21px;height:6px;background:#7eb26d;border-radius:3px;"></div>
<span class="t" style="left:3277.00px;top:407.83px;font-size:18.81px;line-height:25px;letter-spacing:0.357px;color:#ccccdc;font-weight:400;">Front 2xx</span>
<span class="t" style="left:3430.74px;top:407.83px;font-size:18.81px;line-height:25px;letter-spacing:-0.030px;color:#ccccdc;font-weight:400;">0.1 req/s</span>
<span class="t" style="left:3537.04px;top:407.83px;font-size:18.81px;line-height:25px;letter-spacing:-0.030px;color:#ccccdc;font-weight:400;">0.1 req/s</span>
<span class="t" style="left:3639.04px;top:407.83px;font-size:18.81px;line-height:25px;letter-spacing:-0.030px;color:#ccccdc;font-weight:400;">0.1 req/s</span>
<div class="a" style="left:3232px;top:437.04px;width:493px;height:1px;background:#2a2c31;"></div>
<div class="a" style="left:3244px;top:451.97499999999997px;width:21px;height:6px;background:#1f78c1;border-radius:3px;"></div>
<span class="t" style="left:3277.00px;top:443.10px;font-size:18.81px;line-height:25px;letter-spacing:0.372px;color:#ccccdc;font-weight:400;">Front 3xx</span>
<span class="t" style="left:3426.18px;top:443.10px;font-size:18.81px;line-height:25px;letter-spacing:0.540px;color:#ccccdc;font-weight:400;">0.0 req/s</span>
<span class="t" style="left:3532.48px;top:443.10px;font-size:18.81px;line-height:25px;letter-spacing:0.540px;color:#ccccdc;font-weight:400;">0.0 req/s</span>
<span class="t" style="left:3634.48px;top:443.10px;font-size:18.81px;line-height:25px;letter-spacing:0.540px;color:#ccccdc;font-weight:400;">0.0 req/s</span>
<div class="a" style="left:3232px;top:472.31px;width:493px;height:1px;background:#2a2c31;"></div>
<div class="a" style="left:3244px;top:487.24499999999995px;width:21px;height:6px;background:#e5ac0e;border-radius:3px;"></div>
<span class="t" style="left:3277.00px;top:478.37px;font-size:18.81px;line-height:25px;letter-spacing:0.430px;color:#ccccdc;font-weight:400;">Front 4xx</span>
<span class="t" style="left:3426.18px;top:478.37px;font-size:18.81px;line-height:25px;letter-spacing:0.540px;color:#ccccdc;font-weight:400;">0.0 req/s</span>
<span class="t" style="left:3532.48px;top:478.37px;font-size:18.81px;line-height:25px;letter-spacing:0.540px;color:#ccccdc;font-weight:400;">0.0 req/s</span>
<span class="t" style="left:3634.48px;top:478.37px;font-size:18.81px;line-height:25px;letter-spacing:0.540px;color:#ccccdc;font-weight:400;">0.0 req/s</span>
<div class="a" style="left:3232px;top:507.58000000000004px;width:493px;height:1px;background:#2a2c31;"></div>
<div class="a" style="left:3244px;top:522.515px;width:21px;height:6px;background:#890f02;border-radius:3px;"></div>
<span class="t" style="left:3277.00px;top:513.64px;font-size:18.81px;line-height:25px;letter-spacing:0.353px;color:#ccccdc;font-weight:400;">Front 5xx</span>
<span class="t" style="left:3426.18px;top:513.64px;font-size:18.81px;line-height:25px;letter-spacing:0.540px;color:#ccccdc;font-weight:400;">0.0 req/s</span>
<span class="t" style="left:3532.48px;top:513.64px;font-size:18.81px;line-height:25px;letter-spacing:0.540px;color:#ccccdc;font-weight:400;">0.0 req/s</span>
<span class="t" style="left:3634.48px;top:513.64px;font-size:18.81px;line-height:25px;letter-spacing:0.540px;color:#ccccdc;font-weight:400;">0.0 req/s</span>
<div class="a" style="left:3232px;top:542.85px;width:493px;height:1px;background:#2a2c31;"></div>
<div class="a" style="left:3244px;top:557.785px;width:21px;height:6px;background:#806eb7;border-radius:3px;"></div>
<span class="t" style="left:3277.00px;top:548.91px;font-size:18.81px;line-height:25px;letter-spacing:0.366px;color:#ccccdc;font-weight:400;">Front other</span>
<span class="t" style="left:3426.18px;top:548.91px;font-size:18.81px;line-height:25px;letter-spacing:0.540px;color:#ccccdc;font-weight:400;">0.0 req/s</span>
<span class="t" style="left:3532.48px;top:548.91px;font-size:18.81px;line-height:25px;letter-spacing:0.540px;color:#ccccdc;font-weight:400;">0.0 req/s</span>
<span class="t" style="left:3634.48px;top:548.91px;font-size:18.81px;line-height:25px;letter-spacing:0.540px;color:#ccccdc;font-weight:400;">0.0 req/s</span>
<div class="a" style="left:3232px;top:578.12px;width:493px;height:1px;background:#2a2c31;"></div>
<div class="a" style="left:3244px;top:593.055px;width:21px;height:6px;background:#70dbed;border-radius:3px;"></div>
<span class="t" style="left:3277.00px;top:584.18px;font-size:18.81px;line-height:25px;letter-spacing:-0.053px;color:#ccccdc;font-weight:400;">Back 1xx</span>
<span class="t" style="left:3426.18px;top:584.18px;font-size:18.81px;line-height:25px;letter-spacing:0.540px;color:#ccccdc;font-weight:400;">0.0 req/s</span>
<span class="t" style="left:3532.48px;top:584.18px;font-size:18.81px;line-height:25px;letter-spacing:0.540px;color:#ccccdc;font-weight:400;">0.0 req/s</span>
<span class="t" style="left:3634.48px;top:584.18px;font-size:18.81px;line-height:25px;letter-spacing:0.540px;color:#ccccdc;font-weight:400;">0.0 req/s</span>
<div class="a" style="left:3232px;top:613.39px;width:493px;height:1px;background:#2a2c31;"></div>
<div class="a" style="left:3244px;top:628.325px;width:21px;height:6px;background:#7eb26d;border-radius:3px;"></div>
<span class="t" style="left:3277.00px;top:619.45px;font-size:18.81px;line-height:25px;letter-spacing:0.404px;color:#ccccdc;font-weight:400;">Back 2xx</span>
<span class="t" style="left:3426.18px;top:619.45px;font-size:18.81px;line-height:25px;letter-spacing:0.540px;color:#ccccdc;font-weight:400;">0.0 req/s</span>
<span class="t" style="left:3532.48px;top:619.45px;font-size:18.81px;line-height:25px;letter-spacing:0.540px;color:#ccccdc;font-weight:400;">0.0 req/s</span>
<span class="t" style="left:3634.48px;top:619.45px;font-size:18.81px;line-height:25px;letter-spacing:0.540px;color:#ccccdc;font-weight:400;">0.0 req/s</span>
<div class="a" style="left:3232px;top:648.6600000000001px;width:493px;height:1px;background:#2a2c31;"></div>
<div class="a" style="left:3244px;top:663.595px;width:21px;height:6px;background:#1f78c1;border-radius:3px;"></div>
<span class="t" style="left:3277.00px;top:654.72px;font-size:18.81px;line-height:25px;letter-spacing:0.422px;color:#ccccdc;font-weight:400;">Back 3xx</span>
<span class="t" style="left:3426.18px;top:654.72px;font-size:18.81px;line-height:25px;letter-spacing:0.540px;color:#ccccdc;font-weight:400;">0.0 req/s</span>
<span class="t" style="left:3532.48px;top:654.72px;font-size:18.81px;line-height:25px;letter-spacing:0.540px;color:#ccccdc;font-weight:400;">0.0 req/s</span>
<span class="t" style="left:3634.48px;top:654.72px;font-size:18.81px;line-height:25px;letter-spacing:0.540px;color:#ccccdc;font-weight:400;">0.0 req/s</span>
<div class="a" style="left:3232px;top:683.9300000000001px;width:493px;height:1px;background:#2a2c31;"></div>
<div class="a" style="left:3244px;top:698.865px;width:21px;height:6px;background:#e5ac0e;border-radius:3px;"></div>
<span class="t" style="left:3277.00px;top:689.99px;font-size:18.81px;line-height:25px;letter-spacing:0.484px;color:#ccccdc;font-weight:400;">Back 4xx</span>
<span class="t" style="left:3426.18px;top:689.99px;font-size:18.81px;line-height:25px;letter-spacing:0.540px;color:#ccccdc;font-weight:400;">0.0 req/s</span>
<span class="t" style="left:3532.48px;top:689.99px;font-size:18.81px;line-height:25px;letter-spacing:0.540px;color:#ccccdc;font-weight:400;">0.0 req/s</span>
<span class="t" style="left:3634.48px;top:689.99px;font-size:18.81px;line-height:25px;letter-spacing:0.540px;color:#ccccdc;font-weight:400;">0.0 req/s</span>
<div class="a" style="left:3232px;top:719.2px;width:493px;height:1px;background:#2a2c31;"></div>
<div class="a" style="left:3244px;top:734.135px;width:21px;height:6px;background:#890f02;border-radius:3px;"></div>
<span class="t" style="left:3277.00px;top:725.26px;font-size:18.81px;line-height:25px;letter-spacing:0.400px;color:#ccccdc;font-weight:400;">Back 5xx</span>
<span class="t" style="left:3426.18px;top:725.26px;font-size:18.81px;line-height:25px;letter-spacing:0.540px;color:#ccccdc;font-weight:400;">0.0 req/s</span>
<span class="t" style="left:3532.48px;top:725.26px;font-size:18.81px;line-height:25px;letter-spacing:0.540px;color:#ccccdc;font-weight:400;">0.0 req/s</span>
<span class="t" style="left:3634.48px;top:725.26px;font-size:18.81px;line-height:25px;letter-spacing:0.540px;color:#ccccdc;font-weight:400;">0.0 req/s</span>
<div class="a" style="left:3232px;top:754.47px;width:493px;height:1px;background:#2a2c31;"></div>
<div class="a" style="left:3244px;top:769.405px;width:21px;height:6px;background:#806eb7;border-radius:3px;"></div>
<span class="t" style="left:3277.00px;top:760.53px;font-size:18.81px;line-height:25px;letter-spacing:0.405px;color:#ccccdc;font-weight:400;">Back other</span>
<span class="t" style="left:3426.18px;top:760.53px;font-size:18.81px;line-height:25px;letter-spacing:0.540px;color:#ccccdc;font-weight:400;">0.0 req/s</span>
<span class="t" style="left:3532.48px;top:760.53px;font-size:18.81px;line-height:25px;letter-spacing:0.540px;color:#ccccdc;font-weight:400;">0.0 req/s</span>
<span class="t" style="left:3634.48px;top:760.53px;font-size:18.81px;line-height:25px;letter-spacing:0.540px;color:#ccccdc;font-weight:400;">0.0 req/s</span>
<div class="a" style="left:3232px;top:789.74px;width:493px;height:1px;background:#2a2c31;"></div>
<div class="a" style="left:3244px;top:804.675px;width:21px;height:6px;background:#dedbe6;border-radius:3px;"></div>
<span class="t" style="left:3277.00px;top:795.80px;font-size:18.81px;line-height:25px;letter-spacing:0.334px;color:#ccccdc;font-weight:400;">Front requests</span>
<span class="t" style="left:3430.74px;top:795.80px;font-size:18.81px;line-height:25px;letter-spacing:-0.030px;color:#ccccdc;font-weight:400;">0.1 req/s</span>
<span class="t" style="left:3537.04px;top:795.80px;font-size:18.81px;line-height:25px;letter-spacing:-0.030px;color:#ccccdc;font-weight:400;">0.1 req/s</span>
<span class="t" style="left:3639.04px;top:795.80px;font-size:18.81px;line-height:25px;letter-spacing:-0.030px;color:#ccccdc;font-weight:400;">0.1 req/s</span>
<div class="a" style="left:3232px;top:825.01px;width:493px;height:1px;background:#2a2c31;"></div>
</div></div>
<div class="a" style="left:3718.4px;top:332px;width:3px;height:433px;background:#8f8f97;border-radius:1.5px;"></div>
<div class="a" style="left:473px;top:841px;width:1625.5px;height:558px;background:#181b1f;border:1px solid #2b2d32;border-radius:3px;box-sizing:border-box;"></div>
<span class="t" style="left:486.00px;top:851.83px;font-size:21.95px;line-height:29px;letter-spacing:0.516px;color:#ccccdc;font-weight:400;-webkit-text-stroke:0.3px #ccccdc;">Front - Data transfer</span>
<svg class="a" style="left:0px;top:0px;pointer-events:none;" width="3753" height="1903" viewBox="0 0 3753 1903"><path d="M615 949.0H2073.7" stroke="#2a2d32" stroke-width="1.2"/><path d="M615 994.0H2073.7" stroke="#2a2d32" stroke-width="1.2"/><path d="M615 1039.1H2073.7" stroke="#2a2d32" stroke-width="1.2"/><path d="M615 1084.1H2073.7" stroke="#2a2d32" stroke-width="1.2"/><path d="M615 1129.1H2073.7" stroke="#2a2d32" stroke-width="1.2"/><path d="M615 1174.2H2073.7" stroke="#2a2d32" stroke-width="1.2"/><path d="M615 1219.2H2073.7" stroke="#2a2d32" stroke-width="1.2"/><path d="M704.3 913.5V1253" stroke="#2a2d32" stroke-width="1.2"/><path d="M947.3 913.5V1253" stroke="#2a2d32" stroke-width="1.2"/><path d="M1190.2 913.5V1253" stroke="#2a2d32" stroke-width="1.2"/><path d="M1433.2 913.5V1253" stroke="#2a2d32" stroke-width="1.2"/><path d="M1676.1 913.5V1253" stroke="#2a2d32" stroke-width="1.2"/><path d="M1919.1 913.5V1253" stroke="#2a2d32" stroke-width="1.2"/><polygon points="615.0,949.0 2041.0,949.0 2065.2,950.0 2065.2,1168.3 2041.0,1219.3 615.0,1219.3" fill="#fade2a" fill-opacity="0.2"/><polyline points="615.0,1219.3 2041.0,1219.3 2065.2,1168.3" fill="none" stroke="#fade2a" stroke-width="1.6"/><polyline points="615.0,949.0 2041.0,949.0 2065.2,950.0" fill="none" stroke="#73bf69" stroke-width="1.6"/></svg>
<span class="t" style="left:563.29px;top:937.32px;font-size:18.81px;line-height:25px;letter-spacing:0.530px;color:#ccccdc;font-weight:400;">0 b/s</span>
<span class="t" style="left:545.70px;top:982.35px;font-size:18.81px;line-height:25px;letter-spacing:0.673px;color:#ccccdc;font-weight:400;">-5 kb/s</span>
<span class="t" style="left:537.54px;top:1027.38px;font-size:18.81px;line-height:25px;letter-spacing:0.249px;color:#ccccdc;font-weight:400;">-10 kb/s</span>
<span class="t" style="left:537.90px;top:1072.41px;font-size:18.81px;line-height:25px;letter-spacing:0.198px;color:#ccccdc;font-weight:400;">-15 kb/s</span>
<span class="t" style="left:534.86px;top:1117.44px;font-size:18.81px;line-height:25px;letter-spacing:0.632px;color:#ccccdc;font-weight:400;">-20 kb/s</span>
<span class="t" style="left:535.23px;top:1162.47px;font-size:18.81px;line-height:25px;letter-spacing:0.579px;color:#ccccdc;font-weight:400;">-25 kb/s</span>
<span class="t" style="left:534.38px;top:1207.50px;font-size:18.81px;line-height:25px;letter-spacing:0.700px;color:#ccccdc;font-weight:400;">-30 kb/s</span>
<span class="t" style="left:682.84px;top:1257.32px;font-size:18.81px;line-height:25px;letter-spacing:-1.037px;color:#ccccdc;font-weight:400;">13:15</span>
<span class="t" style="left:924.17px;top:1257.32px;font-size:18.81px;line-height:25px;letter-spacing:-0.221px;color:#ccccdc;font-weight:400;">13:20</span>
<span class="t" style="left:1167.29px;top:1257.32px;font-size:18.81px;line-height:25px;letter-spacing:-0.305px;color:#ccccdc;font-weight:400;">13:25</span>
<span class="t" style="left:1410.03px;top:1257.32px;font-size:18.81px;line-height:25px;letter-spacing:-0.193px;color:#ccccdc;font-weight:400;">13:30</span>
<span class="t" style="left:1653.16px;top:1257.32px;font-size:18.81px;line-height:25px;letter-spacing:-0.277px;color:#ccccdc;font-weight:400;">13:35</span>
<span class="t" style="left:1895.75px;top:1257.32px;font-size:18.81px;line-height:25px;letter-spacing:-0.093px;color:#ccccdc;font-weight:400;">13:40</span>
<span class="t" style="left:437.94px;top:1068.52px;font-size:18.81px;line-height:25px;letter-spacing:0.393px;color:#ccccdc;font-weight:400;transform:rotate(-90deg);transform-origin:57.56px 12.48px;">out (-) / in (+)</span>
<span class="t" style="left:531.20px;top:1284.12px;font-size:18.81px;line-height:25px;letter-spacing:0.282px;color:#6e9fff;font-weight:400;-webkit-text-stroke:0.3px #6e9fff;">Name</span>
<span class="t" style="left:1813.24px;top:1284.12px;font-size:18.81px;line-height:25px;letter-spacing:0.717px;color:#6e9fff;font-weight:400;-webkit-text-stroke:0.3px #6e9fff;">Min</span>
<span class="t" style="left:1918.88px;top:1284.12px;font-size:18.81px;line-height:25px;letter-spacing:0.519px;color:#6e9fff;font-weight:400;-webkit-text-stroke:0.3px #6e9fff;">Mean</span>
<span class="t" style="left:2024.94px;top:1284.12px;font-size:18.81px;line-height:25px;letter-spacing:0.605px;color:#6e9fff;font-weight:400;-webkit-text-stroke:0.3px #6e9fff;">Max</span>
<div class="a" style="left:485.8px;top:1313.3px;width:1599.7px;height:1px;background:#2a2c31;"></div>
<div class="a" style="left:498.2px;top:1328.2250000000001px;width:21px;height:6px;background:#73bf69;border-radius:3px;"></div>
<span class="t" style="left:531.20px;top:1319.35px;font-size:18.81px;line-height:25px;letter-spacing:0.152px;color:#ccccdc;font-weight:400;">IN Front</span>
<span class="t" style="left:1799.21px;top:1319.35px;font-size:18.81px;line-height:25px;letter-spacing:0.165px;color:#ccccdc;font-weight:400;">155 b/s</span>
<span class="t" style="left:1904.26px;top:1319.35px;font-size:18.81px;line-height:25px;letter-spacing:0.256px;color:#ccccdc;font-weight:400;">190 b/s</span>
<span class="t" style="left:2009.06px;top:1319.35px;font-size:18.81px;line-height:25px;letter-spacing:0.256px;color:#ccccdc;font-weight:400;">190 b/s</span>
<div class="a" style="left:485.8px;top:1348.55px;width:1599.7px;height:1px;background:#2a2c31;"></div>
<div class="a" style="left:498.2px;top:1363.4750000000001px;width:21px;height:6px;background:#fade2a;border-radius:3px;"></div>
<span class="t" style="left:531.20px;top:1354.60px;font-size:18.81px;line-height:25px;letter-spacing:0.140px;color:#ccccdc;font-weight:400;">OUT Front</span>
<span class="t" style="left:1780.65px;top:1354.60px;font-size:18.81px;line-height:25px;letter-spacing:0.615px;color:#ccccdc;font-weight:400;">24.2 kb/s</span>
<span class="t" style="left:1886.52px;top:1354.60px;font-size:18.81px;line-height:25px;letter-spacing:0.580px;color:#ccccdc;font-weight:400;">29.6 kb/s</span>
<span class="t" style="left:1992.02px;top:1354.60px;font-size:18.81px;line-height:25px;letter-spacing:0.493px;color:#ccccdc;font-weight:400;">29.7 kb/s</span>
<div class="a" style="left:485.8px;top:1383.8px;width:1599.7px;height:1px;background:#2a2c31;"></div>
<div class="a" style="left:2111px;top:841px;width:1626.5px;height:558px;background:#181b1f;border:1px solid #2b2d32;border-radius:3px;box-sizing:border-box;"></div>
<span class="t" style="left:2124.00px;top:851.83px;font-size:21.95px;line-height:29px;letter-spacing:0.531px;color:#ccccdc;font-weight:400;-webkit-text-stroke:0.3px #ccccdc;">Back - Data transfer</span>
<svg class="a" style="left:0px;top:0px;pointer-events:none;" width="3753" height="1903" viewBox="0 0 3753 1903"><path d="M2242.4 913.5H3711.7" stroke="#2a2d32" stroke-width="1.2"/><path d="M2242.4 980.3H3711.7" stroke="#2a2d32" stroke-width="1.2"/><path d="M2242.4 1047.1H3711.7" stroke="#2a2d32" stroke-width="1.2"/><path d="M2242.4 1113.9H3711.7" stroke="#2a2d32" stroke-width="1.2"/><path d="M2242.4 1180.7H3711.7" stroke="#2a2d32" stroke-width="1.2"/><path d="M2242.4 1247.5H3711.7" stroke="#2a2d32" stroke-width="1.2"/><path d="M2333.4 913.5V1253" stroke="#2a2d32" stroke-width="1.2"/><path d="M2578.0 913.5V1253" stroke="#2a2d32" stroke-width="1.2"/><path d="M2822.6 913.5V1253" stroke="#2a2d32" stroke-width="1.2"/><path d="M3067.1 913.5V1253" stroke="#2a2d32" stroke-width="1.2"/><path d="M3311.7 913.5V1253" stroke="#2a2d32" stroke-width="1.2"/><path d="M3556.3 913.5V1253" stroke="#2a2d32" stroke-width="1.2"/><path d="M2242.4 1247.5H3703.7" stroke="#fade2a" stroke-width="1.6"/></svg>
<span class="t" style="left:2172.35px;top:901.52px;font-size:18.81px;line-height:25px;letter-spacing:0.058px;color:#ccccdc;font-weight:400;">100 b/s</span>
<span class="t" style="left:2180.39px;top:968.32px;font-size:18.81px;line-height:25px;letter-spacing:0.551px;color:#ccccdc;font-weight:400;">80 b/s</span>
<span class="t" style="left:2180.36px;top:1035.12px;font-size:18.81px;line-height:25px;letter-spacing:0.557px;color:#ccccdc;font-weight:400;">60 b/s</span>
<span class="t" style="left:2179.97px;top:1101.92px;font-size:18.81px;line-height:25px;letter-spacing:0.635px;color:#ccccdc;font-weight:400;">40 b/s</span>
<span class="t" style="left:2180.52px;top:1168.72px;font-size:18.81px;line-height:25px;letter-spacing:0.525px;color:#ccccdc;font-weight:400;">20 b/s</span>
<span class="t" style="left:2191.49px;top:1235.52px;font-size:18.81px;line-height:25px;letter-spacing:0.530px;color:#ccccdc;font-weight:400;">0 b/s</span>
<span class="t" style="left:2311.94px;top:1257.32px;font-size:18.81px;line-height:25px;letter-spacing:-1.037px;color:#ccccdc;font-weight:400;">13:15</span>
<span class="t" style="left:2554.89px;top:1257.32px;font-size:18.81px;line-height:25px;letter-spacing:-0.221px;color:#ccccdc;font-weight:400;">13:20</span>
<span class="t" style="left:2799.63px;top:1257.32px;font-size:18.81px;line-height:25px;letter-spacing:-0.305px;color:#ccccdc;font-weight:400;">13:25</span>
<span class="t" style="left:3043.99px;top:1257.32px;font-size:18.81px;line-height:25px;letter-spacing:-0.193px;color:#ccccdc;font-weight:400;">13:30</span>
<span class="t" style="left:3288.74px;top:1257.32px;font-size:18.81px;line-height:25px;letter-spacing:-0.277px;color:#ccccdc;font-weight:400;">13:35</span>
<span class="t" style="left:3532.95px;top:1257.32px;font-size:18.81px;line-height:25px;letter-spacing:-0.093px;color:#ccccdc;font-weight:400;">13:40</span>
<span class="t" style="left:2076.04px;top:1068.52px;font-size:18.81px;line-height:25px;letter-spacing:0.393px;color:#ccccdc;font-weight:400;transform:rotate(-90deg);transform-origin:57.56px 12.48px;">out (-) / in (+)</span>
<span class="t" style="left:2169.10px;top:1284.12px;font-size:18.81px;line-height:25px;letter-spacing:0.282px;color:#6e9fff;font-weight:400;-webkit-text-stroke:0.3px #6e9fff;">Name</span>
<span class="t" style="left:3477.94px;top:1284.12px;font-size:18.81px;line-height:25px;letter-spacing:0.717px;color:#6e9fff;font-weight:400;-webkit-text-stroke:0.3px #6e9fff;">Min</span>
<span class="t" style="left:3567.18px;top:1284.12px;font-size:18.81px;line-height:25px;letter-spacing:0.519px;color:#6e9fff;font-weight:400;-webkit-text-stroke:0.3px #6e9fff;">Mean</span>
<span class="t" style="left:3673.64px;top:1284.12px;font-size:18.81px;line-height:25px;letter-spacing:0.605px;color:#6e9fff;font-weight:400;-webkit-text-stroke:0.3px #6e9fff;">Max</span>
<div class="a" style="left:2123.5px;top:1313.3px;width:1599.3000000000002px;height:1px;background:#2a2c31;"></div>
<div class="a" style="left:2136.3px;top:1328.2250000000001px;width:21px;height:6px;background:#73bf69;border-radius:3px;"></div>
<span class="t" style="left:2169.10px;top:1319.35px;font-size:18.81px;line-height:25px;letter-spacing:0.175px;color:#ccccdc;font-weight:400;">IN Back</span>
<span class="t" style="left:3465.89px;top:1319.35px;font-size:18.81px;line-height:25px;letter-spacing:0.755px;color:#ccccdc;font-weight:400;">0 b/s</span>
<span class="t" style="left:3571.99px;top:1319.35px;font-size:18.81px;line-height:25px;letter-spacing:0.755px;color:#ccccdc;font-weight:400;">0 b/s</span>
<span class="t" style="left:3666.59px;top:1319.35px;font-size:18.81px;line-height:25px;letter-spacing:0.755px;color:#ccccdc;font-weight:400;">0 b/s</span>
<div class="a" style="left:2123.5px;top:1348.55px;width:1599.3000000000002px;height:1px;background:#2a2c31;"></div>
<div class="a" style="left:2136.3px;top:1363.4750000000001px;width:21px;height:6px;background:#fade2a;border-radius:3px;"></div>
<span class="t" style="left:2169.10px;top:1354.60px;font-size:18.81px;line-height:25px;letter-spacing:0.160px;color:#ccccdc;font-weight:400;">OUT Back</span>
<span class="t" style="left:3465.89px;top:1354.60px;font-size:18.81px;line-height:25px;letter-spacing:0.755px;color:#ccccdc;font-weight:400;">0 b/s</span>
<span class="t" style="left:3571.99px;top:1354.60px;font-size:18.81px;line-height:25px;letter-spacing:0.755px;color:#ccccdc;font-weight:400;">0 b/s</span>
<span class="t" style="left:3666.59px;top:1354.60px;font-size:18.81px;line-height:25px;letter-spacing:0.755px;color:#ccccdc;font-weight:400;">0 b/s</span>
<div class="a" style="left:2123.5px;top:1383.8px;width:1599.3000000000002px;height:1px;background:#2a2c31;"></div>
<div class="a" style="left:473px;top:1411px;width:1625.5px;height:558px;background:#181b1f;border:1px solid #2b2d32;border-radius:3px;box-sizing:border-box;"></div>
<span class="t" style="left:486.00px;top:1421.83px;font-size:21.95px;line-height:29px;letter-spacing:0.400px;color:#ccccdc;font-weight:400;-webkit-text-stroke:0.3px #ccccdc;">Sessions</span>
<svg class="a" style="left:0px;top:0px;pointer-events:none;" width="3753" height="1903" viewBox="0 0 3753 1903"><path d="M643.7 1493.6H2073.8" stroke="#2a2d32" stroke-width="1.2"/><path d="M643.7 1539.9H2073.8" stroke="#2a2d32" stroke-width="1.2"/><path d="M643.7 1586.1H2073.8" stroke="#2a2d32" stroke-width="1.2"/><path d="M643.7 1632.4H2073.8" stroke="#2a2d32" stroke-width="1.2"/><path d="M643.7 1678.7H2073.8" stroke="#2a2d32" stroke-width="1.2"/><path d="M643.7 1724.9H2073.8" stroke="#2a2d32" stroke-width="1.2"/><path d="M643.7 1771.2H2073.8" stroke="#2a2d32" stroke-width="1.2"/><path d="M643.7 1817.5H2073.8" stroke="#2a2d32" stroke-width="1.2"/><path d="M731.5 1483.6V1823.5" stroke="#2a2d32" stroke-width="1.2"/><path d="M969.7 1483.6V1823.5" stroke="#2a2d32" stroke-width="1.2"/><path d="M1207.9 1483.6V1823.5" stroke="#2a2d32" stroke-width="1.2"/><path d="M1446.1 1483.6V1823.5" stroke="#2a2d32" stroke-width="1.2"/><path d="M1684.3 1483.6V1823.5" stroke="#2a2d32" stroke-width="1.2"/><path d="M1922.5 1483.6V1823.5" stroke="#2a2d32" stroke-width="1.2"/><polygon points="660.7,1817.5 684.5,1641.6 756.0,1641.6 779.8,1817.5" fill="#73bf69" fill-opacity="0.2"/><polygon points="1994.2,1817.5 2018.1,1641.8 2041.9,1553.3 2065.7,1517.8 2065.7,1817.5" fill="#73bf69" fill-opacity="0.2"/><polyline points="643.7,1817.5 660.7,1817.5 684.5,1641.6 756.0,1641.6 779.8,1817.5 1994.2,1817.5 2018.1,1641.8 2041.9,1553.3 2065.7,1517.8" fill="none" stroke="#73bf69" stroke-width="1.6" stroke-linejoin="round"/><path d="M643.7 1817.5H2065.7" stroke="#fade2a" stroke-width="1.8"/></svg>
<span class="t" style="left:534.56px;top:1481.12px;font-size:18.81px;line-height:25px;letter-spacing:0.378px;color:#ccccdc;font-weight:400;">0.035 ops/s</span>
<span class="t" style="left:545.50px;top:1527.39px;font-size:18.81px;line-height:25px;letter-spacing:0.367px;color:#ccccdc;font-weight:400;">0.03 ops/s</span>
<span class="t" style="left:534.68px;top:1573.66px;font-size:18.81px;line-height:25px;letter-spacing:0.365px;color:#ccccdc;font-weight:400;">0.025 ops/s</span>
<span class="t" style="left:545.62px;top:1619.93px;font-size:18.81px;line-height:25px;letter-spacing:0.353px;color:#ccccdc;font-weight:400;">0.02 ops/s</span>
<span class="t" style="left:538.01px;top:1666.20px;font-size:18.81px;line-height:25px;letter-spacing:0.033px;color:#ccccdc;font-weight:400;">0.015 ops/s</span>
<span class="t" style="left:548.92px;top:1712.47px;font-size:18.81px;line-height:25px;letter-spacing:-0.013px;color:#ccccdc;font-weight:400;">0.01 ops/s</span>
<span class="t" style="left:534.34px;top:1758.74px;font-size:18.81px;line-height:25px;letter-spacing:0.399px;color:#ccccdc;font-weight:400;">0.005 ops/s</span>
<span class="t" style="left:572.30px;top:1805.01px;font-size:18.81px;line-height:25px;letter-spacing:0.439px;color:#ccccdc;font-weight:400;">0 ops/s</span>
<span class="t" style="left:710.04px;top:1827.02px;font-size:18.81px;line-height:25px;letter-spacing:-1.037px;color:#ccccdc;font-weight:400;">13:15</span>
<span class="t" style="left:946.61px;top:1827.02px;font-size:18.81px;line-height:25px;letter-spacing:-0.221px;color:#ccccdc;font-weight:400;">13:20</span>
<span class="t" style="left:1184.97px;top:1827.02px;font-size:18.81px;line-height:25px;letter-spacing:-0.305px;color:#ccccdc;font-weight:400;">13:25</span>
<span class="t" style="left:1422.95px;top:1827.02px;font-size:18.81px;line-height:25px;letter-spacing:-0.193px;color:#ccccdc;font-weight:400;">13:30</span>
<span class="t" style="left:1661.32px;top:1827.02px;font-size:18.81px;line-height:25px;letter-spacing:-0.277px;color:#ccccdc;font-weight:400;">13:35</span>
<span class="t" style="left:1899.15px;top:1827.02px;font-size:18.81px;line-height:25px;letter-spacing:-0.093px;color:#ccccdc;font-weight:400;">13:40</span>
<span class="t" style="left:417.38px;top:1638.52px;font-size:18.81px;line-height:25px;letter-spacing:0.465px;color:#ccccdc;font-weight:400;transform:rotate(-90deg);transform-origin:77.32px 12.48px;">back (-) / front (+)</span>
<span class="t" style="left:531.30px;top:1854.52px;font-size:18.81px;line-height:25px;letter-spacing:0.282px;color:#6e9fff;font-weight:400;-webkit-text-stroke:0.3px #6e9fff;">Name</span>
<span class="t" style="left:1750.94px;top:1854.52px;font-size:18.81px;line-height:25px;letter-spacing:0.717px;color:#6e9fff;font-weight:400;-webkit-text-stroke:0.3px #6e9fff;">Min</span>
<span class="t" style="left:1839.98px;top:1854.52px;font-size:18.81px;line-height:25px;letter-spacing:0.519px;color:#6e9fff;font-weight:400;-webkit-text-stroke:0.3px #6e9fff;">Mean</span>
<span class="t" style="left:1990.44px;top:1854.52px;font-size:18.81px;line-height:25px;letter-spacing:0.605px;color:#6e9fff;font-weight:400;-webkit-text-stroke:0.3px #6e9fff;">Max</span>
<div class="a" style="left:485.8px;top:1883.4px;width:1598.5000000000002px;height:1px;background:#2a2c31;"></div>
<div class="a" style="left:498.2px;top:1898.3250000000003px;width:21px;height:6px;background:#73bf69;border-radius:3px;"></div>
<span class="t" style="left:531.30px;top:1889.45px;font-size:18.81px;line-height:25px;letter-spacing:0.225px;color:#ccccdc;font-weight:400;">Front</span>
<span class="t" style="left:1718.05px;top:1889.45px;font-size:18.81px;line-height:25px;letter-spacing:0.664px;color:#ccccdc;font-weight:400;">0 ops/s</span>
<span class="t" style="left:1807.13px;top:1889.45px;font-size:18.81px;line-height:25px;letter-spacing:0.657px;color:#ccccdc;font-weight:400;">0.00256 ops/s</span>
<span class="t" style="left:1957.82px;top:1889.45px;font-size:18.81px;line-height:25px;letter-spacing:0.614px;color:#ccccdc;font-weight:400;">0.0325 ops/s</span>
<div class="a" style="left:485.8px;top:1918.65px;width:1598.5000000000002px;height:1px;background:#2a2c31;"></div>
<div class="a" style="left:498.2px;top:1933.5750000000003px;width:21px;height:6px;background:#fade2a;border-radius:3px;"></div>
<span class="t" style="left:531.30px;top:1924.70px;font-size:18.81px;line-height:25px;letter-spacing:0.279px;color:#ccccdc;font-weight:400;">Back</span>
<span class="t" style="left:1718.05px;top:1924.70px;font-size:18.81px;line-height:25px;letter-spacing:0.664px;color:#ccccdc;font-weight:400;">0 ops/s</span>
<span class="t" style="left:1868.55px;top:1924.70px;font-size:18.81px;line-height:25px;letter-spacing:0.664px;color:#ccccdc;font-weight:400;">0 ops/s</span>
<span class="t" style="left:2007.65px;top:1924.70px;font-size:18.81px;line-height:25px;letter-spacing:0.664px;color:#ccccdc;font-weight:400;">0 ops/s</span>
<div class="a" style="left:485.8px;top:1953.9px;width:1598.5000000000002px;height:1px;background:#2a2c31;"></div>
<div class="a" style="left:2111px;top:1411px;width:1626.5px;height:558px;background:#181b1f;border:1px solid #2b2d32;border-radius:3px;box-sizing:border-box;"></div>
<span class="t" style="left:2124.00px;top:1421.83px;font-size:21.95px;line-height:29px;letter-spacing:0.668px;color:#ccccdc;font-weight:400;-webkit-text-stroke:0.3px #ccccdc;">Connections</span>
<svg class="a" style="left:0px;top:0px;pointer-events:none;" width="3753" height="1903" viewBox="0 0 3753 1903"><path d="M2281.8 1493.6H3711.4" stroke="#2a2d32" stroke-width="1.2"/><path d="M2281.8 1539.9H3711.4" stroke="#2a2d32" stroke-width="1.2"/><path d="M2281.8 1586.1H3711.4" stroke="#2a2d32" stroke-width="1.2"/><path d="M2281.8 1632.4H3711.4" stroke="#2a2d32" stroke-width="1.2"/><path d="M2281.8 1678.7H3711.4" stroke="#2a2d32" stroke-width="1.2"/><path d="M2281.8 1724.9H3711.4" stroke="#2a2d32" stroke-width="1.2"/><path d="M2281.8 1771.2H3711.4" stroke="#2a2d32" stroke-width="1.2"/><path d="M2281.8 1817.5H3711.4" stroke="#2a2d32" stroke-width="1.2"/><path d="M2369.6 1483.6V1823.5" stroke="#2a2d32" stroke-width="1.2"/><path d="M2607.8 1483.6V1823.5" stroke="#2a2d32" stroke-width="1.2"/><path d="M2846.0 1483.6V1823.5" stroke="#2a2d32" stroke-width="1.2"/><path d="M3084.2 1483.6V1823.5" stroke="#2a2d32" stroke-width="1.2"/><path d="M3322.4 1483.6V1823.5" stroke="#2a2d32" stroke-width="1.2"/><path d="M3560.6 1483.6V1823.5" stroke="#2a2d32" stroke-width="1.2"/><polygon points="2298.8,1817.5 2322.6,1641.6 2394.1,1641.6 2417.9,1817.5" fill="#73bf69" fill-opacity="0.2"/><polygon points="3632.2,1817.5 3656.1,1641.8 3679.9,1553.3 3703.7,1517.8 3703.7,1817.5" fill="#73bf69" fill-opacity="0.2"/><polyline points="2281.8,1817.5 2298.8,1817.5 2322.6,1641.6 2394.1,1641.6 2417.9,1817.5 3632.2,1817.5 3656.1,1641.8 3679.9,1553.3 3703.7,1517.8" fill="none" stroke="#73bf69" stroke-width="1.6" stroke-linejoin="round"/><path d="M2281.8 1817.5H3703.7" stroke="#fade2a" stroke-width="1.8"/></svg>
<span class="t" style="left:2172.26px;top:1481.12px;font-size:18.81px;line-height:25px;letter-spacing:0.378px;color:#ccccdc;font-weight:400;">0.035 ops/s</span>
<span class="t" style="left:2183.20px;top:1527.39px;font-size:18.81px;line-height:25px;letter-spacing:0.367px;color:#ccccdc;font-weight:400;">0.03 ops/s</span>
<span class="t" style="left:2172.38px;top:1573.66px;font-size:18.81px;line-height:25px;letter-spacing:0.365px;color:#ccccdc;font-weight:400;">0.025 ops/s</span>
<span class="t" style="left:2183.32px;top:1619.93px;font-size:18.81px;line-height:25px;letter-spacing:0.353px;color:#ccccdc;font-weight:400;">0.02 ops/s</span>
<span class="t" style="left:2175.71px;top:1666.20px;font-size:18.81px;line-height:25px;letter-spacing:0.033px;color:#ccccdc;font-weight:400;">0.015 ops/s</span>
<span class="t" style="left:2186.62px;top:1712.47px;font-size:18.81px;line-height:25px;letter-spacing:-0.013px;color:#ccccdc;font-weight:400;">0.01 ops/s</span>
<span class="t" style="left:2172.04px;top:1758.74px;font-size:18.81px;line-height:25px;letter-spacing:0.399px;color:#ccccdc;font-weight:400;">0.005 ops/s</span>
<span class="t" style="left:2210.00px;top:1805.01px;font-size:18.81px;line-height:25px;letter-spacing:0.439px;color:#ccccdc;font-weight:400;">0 ops/s</span>
<span class="t" style="left:2348.14px;top:1827.02px;font-size:18.81px;line-height:25px;letter-spacing:-1.037px;color:#ccccdc;font-weight:400;">13:15</span>
<span class="t" style="left:2584.71px;top:1827.02px;font-size:18.81px;line-height:25px;letter-spacing:-0.221px;color:#ccccdc;font-weight:400;">13:20</span>
<span class="t" style="left:2823.07px;top:1827.02px;font-size:18.81px;line-height:25px;letter-spacing:-0.305px;color:#ccccdc;font-weight:400;">13:25</span>
<span class="t" style="left:3061.05px;top:1827.02px;font-size:18.81px;line-height:25px;letter-spacing:-0.193px;color:#ccccdc;font-weight:400;">13:30</span>
<span class="t" style="left:3299.42px;top:1827.02px;font-size:18.81px;line-height:25px;letter-spacing:-0.277px;color:#ccccdc;font-weight:400;">13:35</span>
<span class="t" style="left:3537.25px;top:1827.02px;font-size:18.81px;line-height:25px;letter-spacing:-0.093px;color:#ccccdc;font-weight:400;">13:40</span>
<span class="t" style="left:2056.18px;top:1638.52px;font-size:18.81px;line-height:25px;letter-spacing:0.465px;color:#ccccdc;font-weight:400;transform:rotate(-90deg);transform-origin:77.32px 12.48px;">back (-) / front (+)</span>
<span class="t" style="left:2169.30px;top:1854.52px;font-size:18.81px;line-height:25px;letter-spacing:0.282px;color:#6e9fff;font-weight:400;-webkit-text-stroke:0.3px #6e9fff;">Name</span>
<span class="t" style="left:3388.94px;top:1854.52px;font-size:18.81px;line-height:25px;letter-spacing:0.717px;color:#6e9fff;font-weight:400;-webkit-text-stroke:0.3px #6e9fff;">Min</span>
<span class="t" style="left:3477.98px;top:1854.52px;font-size:18.81px;line-height:25px;letter-spacing:0.519px;color:#6e9fff;font-weight:400;-webkit-text-stroke:0.3px #6e9fff;">Mean</span>
<span class="t" style="left:3628.84px;top:1854.52px;font-size:18.81px;line-height:25px;letter-spacing:0.605px;color:#6e9fff;font-weight:400;-webkit-text-stroke:0.3px #6e9fff;">Max</span>
<div class="a" style="left:2123.5px;top:1883.4px;width:1599.3000000000002px;height:1px;background:#2a2c31;"></div>
<div class="a" style="left:2136.2px;top:1898.3250000000003px;width:21px;height:6px;background:#73bf69;border-radius:3px;"></div>
<span class="t" style="left:2169.30px;top:1889.45px;font-size:18.81px;line-height:25px;letter-spacing:0.225px;color:#ccccdc;font-weight:400;">Front</span>
<span class="t" style="left:3356.05px;top:1889.45px;font-size:18.81px;line-height:25px;letter-spacing:0.664px;color:#ccccdc;font-weight:400;">0 ops/s</span>
<span class="t" style="left:3445.13px;top:1889.45px;font-size:18.81px;line-height:25px;letter-spacing:0.657px;color:#ccccdc;font-weight:400;">0.00256 ops/s</span>
<span class="t" style="left:3595.82px;top:1889.45px;font-size:18.81px;line-height:25px;letter-spacing:0.614px;color:#ccccdc;font-weight:400;">0.0325 ops/s</span>
<div class="a" style="left:2123.5px;top:1918.65px;width:1599.3000000000002px;height:1px;background:#2a2c31;"></div>
<div class="a" style="left:2136.2px;top:1933.5750000000003px;width:21px;height:6px;background:#fade2a;border-radius:3px;"></div>
<span class="t" style="left:2169.30px;top:1924.70px;font-size:18.81px;line-height:25px;letter-spacing:0.279px;color:#ccccdc;font-weight:400;">Back</span>
<span class="t" style="left:3356.05px;top:1924.70px;font-size:18.81px;line-height:25px;letter-spacing:0.664px;color:#ccccdc;font-weight:400;">0 ops/s</span>
<span class="t" style="left:3506.55px;top:1924.70px;font-size:18.81px;line-height:25px;letter-spacing:0.664px;color:#ccccdc;font-weight:400;">0 ops/s</span>
<span class="t" style="left:3645.65px;top:1924.70px;font-size:18.81px;line-height:25px;letter-spacing:0.664px;color:#ccccdc;font-weight:400;">0 ops/s</span>
<div class="a" style="left:2123.5px;top:1953.9px;width:1599.3000000000002px;height:1px;background:#2a2c31;"></div>
</body></html>
